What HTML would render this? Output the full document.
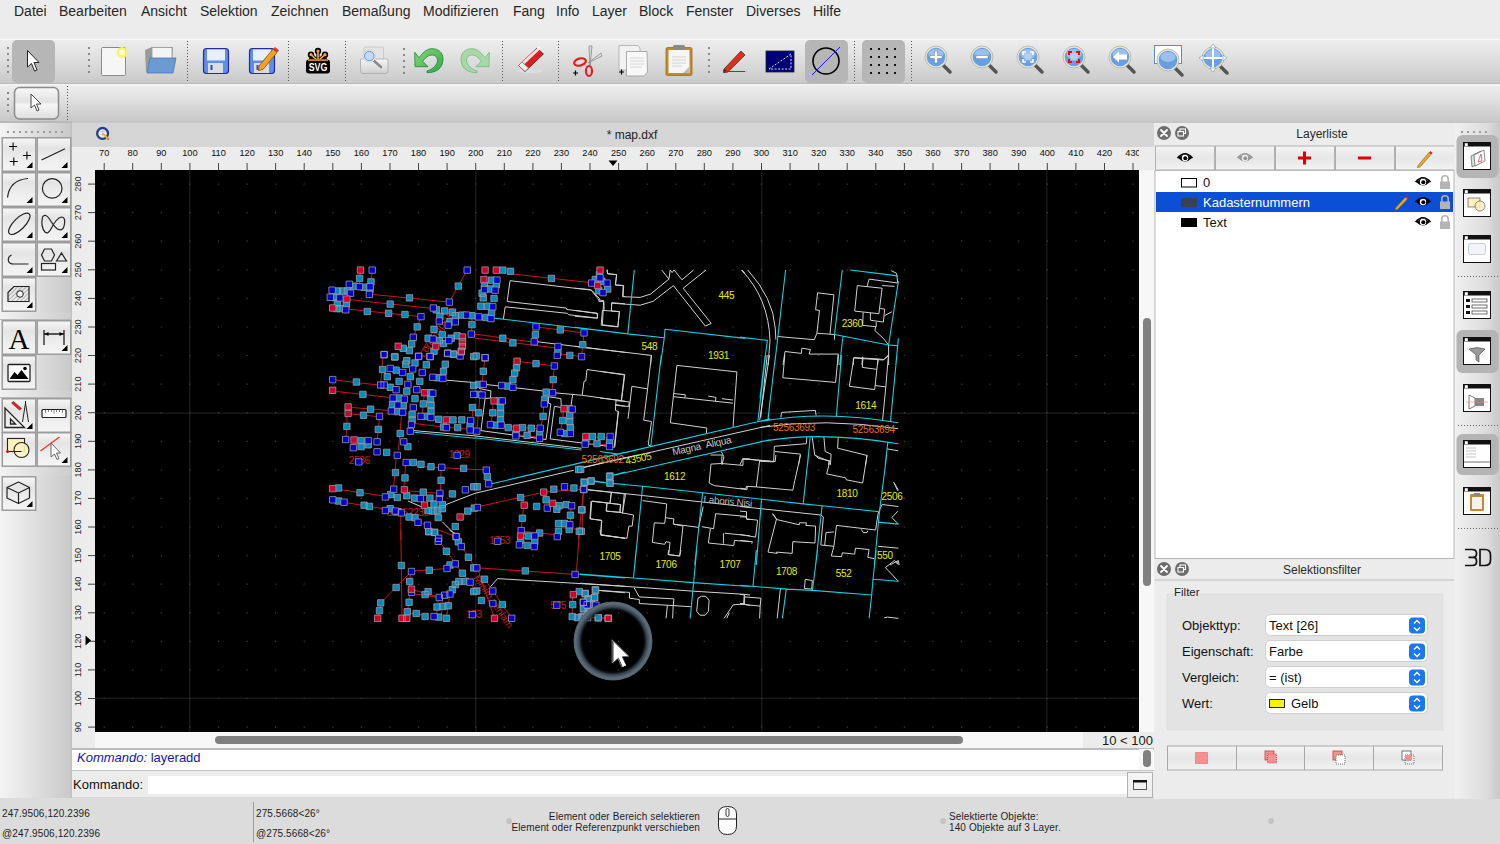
<!DOCTYPE html>
<html><head><meta charset="utf-8">
<style>
*{box-sizing:border-box;margin:0;padding:0}
html,body{width:1500px;height:844px;overflow:hidden;background:#ececec;font-family:"Liberation Sans",sans-serif;color:#1a1a1a;position:relative}
.abs{position:absolute}
#menubar{left:0;top:0;width:1500px;height:38px;background:#ececec}
#menubar span{position:absolute;top:3px;font-size:14px;color:#262626}
#tb1{left:0;top:39px;width:1500px;height:45px;background:linear-gradient(#ededed,#e4e4e4 30%,#cbcbcb 95%);border-top:1px solid #fafafa;border-bottom:1px solid #b8b8b8}
#tb2{left:0;top:84px;width:1500px;height:39px;background:linear-gradient(#eeeeee,#e2e2e2 35%,#cacaca 93%);border-top:1px solid #f6f6f6;border-bottom:2px solid #b8b8b8}
#toolbox{left:0;top:123px;width:71px;height:676px;background:linear-gradient(90deg,#f4f4f4,#c9c9c9)}
.tbtn{position:absolute;width:35px;height:35px;border:1.5px solid #9a9a9a;background:linear-gradient(#f6f6f6,#e6e6e6 40%,#f3f3f3)}
#tabbar{left:72px;top:123px;width:1082px;height:24px;background:#d5d5d5}
#rulerTop{left:72px;top:147px;width:1082px;height:23px;background:#ececec}
#rulerLeft{left:72px;top:170px;width:23px;height:578px;background:#ececec}
#canvas{left:95px;top:170px;width:1044px;height:562px;background:#000;overflow:hidden}
#status{left:0;top:799px;width:1500px;height:45px;background:#dcdcdc}

</style></head>
<body>
<div id="menubar" class="abs">
<span style="left:14px">Datei</span><span style="left:59px">Bearbeiten</span><span style="left:141px">Ansicht</span><span style="left:200px">Selektion</span><span style="left:271px">Zeichnen</span><span style="left:342px">Bemaßung</span><span style="left:423px">Modifizieren</span><span style="left:513px">Fang</span><span style="left:556px">Info</span><span style="left:592px">Layer</span><span style="left:639px">Block</span><span style="left:686px">Fenster</span><span style="left:746px">Diverses</span><span style="left:813px">Hilfe</span>
</div>
<div id="tb1" class="abs"></div>
<div id="tb2" class="abs"></div>
<svg class="abs" style="left:0;top:0" width="1500" height="123"><defs><linearGradient id="prg" x1="0" y1="0" x2="0" y2="1"><stop offset="0" stop-color="#f6f6f6"/><stop offset="1" stop-color="#cfcfcf"/></linearGradient><linearGradient id="ug" x1="0" y1="0" x2="1" y2="1"><stop offset="0" stop-color="#8fd47a"/><stop offset="1" stop-color="#2ea84a"/></linearGradient><linearGradient id="btng" x1="0" y1="0" x2="0" y2="1"><stop offset="0" stop-color="#f8f8f8"/><stop offset="0.45" stop-color="#e2e2e2"/><stop offset="0.55" stop-color="#f6f6f6"/><stop offset="1" stop-color="#dedede"/></linearGradient></defs><rect x="7" y="47" width="2" height="2" fill="#8a8a8a"/><rect x="7" y="53" width="2" height="2" fill="#8a8a8a"/><rect x="7" y="59" width="2" height="2" fill="#8a8a8a"/><rect x="7" y="65" width="2" height="2" fill="#8a8a8a"/><rect x="7" y="71" width="2" height="2" fill="#8a8a8a"/><rect x="12" y="40" width="43" height="43" rx="5" fill="#b6b6b6"/><path d="M27.5 50.5 L27.5 67 L31.5 63.5 L34.5 71 L37 70 L34 62.5 L39 62.5 Z" fill="#fff" stroke="#222" stroke-width="1"/><rect x="88" y="47" width="2" height="2" fill="#8a8a8a"/><rect x="88" y="53" width="2" height="2" fill="#8a8a8a"/><rect x="88" y="59" width="2" height="2" fill="#8a8a8a"/><rect x="88" y="65" width="2" height="2" fill="#8a8a8a"/><rect x="88" y="71" width="2" height="2" fill="#8a8a8a"/><rect x="101.5" y="47.5" width="24" height="28" rx="1" fill="#f6f6f6" stroke="#8a8a8a"/><circle cx="122" cy="52.5" r="5.5" fill="#f4f46a" opacity="0.9"/><circle cx="122" cy="52.5" r="3" fill="#ffffc0"/><path d="M145 50 L152 47 L173 47 L172 62 L146 72 Z" fill="#9a9a9a"/><rect x="152" y="47.5" width="20" height="16" fill="#f4f4f4" stroke="#999" stroke-width="0.8"/><path d="M150 58 L176 58 L173 73 L147 73 Z" fill="#6b9bd2" stroke="#4a7ab8" stroke-width="0.8"/><line x1="187.5" y1="41" x2="187.5" y2="81" stroke="#555" stroke-width="1" stroke-dasharray="1 2"/><rect x="203.5" y="48.5" width="25" height="25" rx="3" fill="#5c8df2" stroke="#2a2a9a" stroke-width="1.2"/><rect x="207" y="49.5" width="18" height="11" fill="#e8eefc"/><rect x="208" y="63" width="15" height="10" fill="#dcdcdc"/><rect x="210.5" y="65" width="2" height="5" fill="#2a4ad0"/><rect x="249.5" y="48.5" width="25" height="25" rx="3" fill="#5c8df2" stroke="#2a2a9a" stroke-width="1.2"/><rect x="253" y="49.5" width="18" height="11" fill="#e8eefc"/><rect x="254" y="63" width="15" height="10" fill="#dcdcdc"/><rect x="256.5" y="65" width="2" height="5" fill="#2a4ad0"/><path d="M259 66 L273 49 L277 52.5 L263 69.5 L258.5 70.5 Z" fill="#f2a21e" stroke="#8a4a10" stroke-width="0.8"/><path d="M273 49 L275 47 L279 50.5 L277 52.5Z" fill="#e03030"/><line x1="288.5" y1="41" x2="288.5" y2="81" stroke="#555" stroke-width="1" stroke-dasharray="1 2"/><g stroke="#000" stroke-width="1.6"><path d="M318 61 L311 54.7 M318 61 L318 51 M318 61 L325 54.7 M318 61 L309 59 M318 61 L327 59" stroke="#000" stroke-width="3.2"/><circle cx="311" cy="54.7" r="2.4" fill="#f6a530"/><circle cx="318" cy="51" r="2.4" fill="#f6a530"/><circle cx="325" cy="54.7" r="2.4" fill="#f6a530"/></g><path d="M318 61 L311 54.7 M318 61 L318 51 M318 61 L325 54.7 M318 61 L309.5 59.5 M318 61 L326.5 59.5" stroke="#f6a530" stroke-width="1.6"/><rect x="306" y="59.5" width="24" height="14" rx="3" fill="#000"/><rect x="308" y="59.5" width="20" height="1.3" fill="#f6a530"/><text x="318" y="71.5" font-family="Liberation Sans" font-weight="bold" font-size="11" fill="#fff" text-anchor="middle" transform="translate(318 0) scale(0.8 1) translate(-318 0)">SVG</text><line x1="345.5" y1="41" x2="345.5" y2="81" stroke="#555" stroke-width="1" stroke-dasharray="1 2"/><rect x="364" y="47" width="19.5" height="13" rx="1" fill="#e4e4e4" stroke="#c4c4c4" stroke-width="0.8"/><path d="M361 59 L387 59 Q388 59 388 61 L388 71 Q388 73.5 385 73.5 L363 73.5 Q360.5 73.5 360.5 71 L360.5 61 Q360.5 59 361 59 Z" fill="url(#prg)" stroke="#a8a8a8" stroke-width="0.8"/><line x1="373" y1="60" x2="381" y2="67" stroke="#8a8a8a" stroke-width="2.6" stroke-linecap="round"/><circle cx="369.3" cy="56" r="6.2" fill="#f2f2f2" stroke="#d8d8d8" stroke-width="1"/><circle cx="369.3" cy="56" r="4.8" fill="#c4daf2" stroke="#5a8ad0" stroke-width="0.9"/><rect x="403" y="48" width="2" height="2" fill="#8a8a8a"/><rect x="403" y="54" width="2" height="2" fill="#8a8a8a"/><rect x="403" y="60" width="2" height="2" fill="#8a8a8a"/><rect x="403" y="66" width="2" height="2" fill="#8a8a8a"/><rect x="403" y="72" width="2" height="2" fill="#8a8a8a"/><path d="M414.7 52.3 L419 57.7 C424 51 428 48.7 432 48.7 C439 48.7 443 53 443 59 C443 67 438 72.7 427 72.7 L427 71 C433 69 437.5 65 437.5 60 C437.5 57 435 55 432 55 C429 55 426 57 422.7 61.3 L428 66.7 L415 66.7 Z" fill="url(#ug)" stroke="#118a30" stroke-width="0.8"/><g transform="translate(904 0) scale(-1 1)"><path d="M414.7 52.3 L419 57.7 C424 51 428 48.7 432 48.7 C439 48.7 443 53 443 59 C443 67 438 72.7 427 72.7 L427 71 C433 69 437.5 65 437.5 60 C437.5 57 435 55 432 55 C429 55 426 57 422.7 61.3 L428 66.7 L415 66.7 Z" fill="#a8d8a8" stroke="#70b880" stroke-width="0.8"/></g><line x1="502.5" y1="41" x2="502.5" y2="81" stroke="#555" stroke-width="1" stroke-dasharray="1 2"/><ellipse cx="530" cy="71" rx="13" ry="2" fill="#ddd"/><path d="M518.5 65.5 L537 48 L543.5 54 L525 71.5 Z" fill="#d42020" stroke="#8a1010" stroke-width="0.8"/><path d="M520.5 63.5 L539 46.5 L541 48.5 L522.5 66 Z" fill="#fff" opacity="0.85"/><path d="M518.5 65.5 L522 62 L528.5 68 L525 71.5 Z" fill="#f2f2f2" stroke="#777" stroke-width="0.8"/><line x1="558.5" y1="41" x2="558.5" y2="81" stroke="#555" stroke-width="1" stroke-dasharray="1 2"/><path d="M589 46 L592 46 L590 67 Z" fill="#ddd" stroke="#888" stroke-width="0.8"/><path d="M601 53 L602 56 L588 63 Z" fill="#ddd" stroke="#888" stroke-width="0.8"/><ellipse cx="580" cy="62" rx="6" ry="3.5" fill="none" stroke="#e02020" stroke-width="2.2" transform="rotate(-15 580 62)"/><ellipse cx="589" cy="71" rx="3" ry="5" fill="none" stroke="#e02020" stroke-width="2.2"/><path d="M573 73 h5 M575.5 70.5 v5" stroke="#000" stroke-width="1.2"/><path d="M619 45.5 L638 45.5 L640 48 L640 70 L619 70 Z" fill="#f2f2f2" stroke="#aaa" stroke-width="0.8"/><path d="M626.5 51.5 L647 51.5 L647.5 72 L644 76 L626.5 76 Z" fill="#f8f8f8" stroke="#999" stroke-width="0.8"/><path d="M630 58 h14 M630 61 h14 M630 64 h14 M630 67 h12" stroke="#ccc" stroke-width="0.8"/><path d="M619 72 h5 M621.5 69.5 v5" stroke="#000" stroke-width="1.2"/><rect x="666" y="47.5" width="26" height="28" rx="1.5" fill="#c08a30" stroke="#a06a18" stroke-width="0.8"/><rect x="668.5" y="50" width="21" height="23" fill="#f6f6f6"/><rect x="673" y="45" width="12" height="5" rx="1.5" fill="#8a8a80"/><path d="M672 57 h14 M672 60 h14 M672 63 h14 M672 66 h10" stroke="#ccc" stroke-width="0.8"/><path d="M689 73 L683 73 L689 67 Z" fill="#bbb"/><rect x="708" y="47" width="2" height="2" fill="#8a8a8a"/><rect x="708" y="53" width="2" height="2" fill="#8a8a8a"/><rect x="708" y="59" width="2" height="2" fill="#8a8a8a"/><rect x="708" y="65" width="2" height="2" fill="#8a8a8a"/><rect x="708" y="71" width="2" height="2" fill="#8a8a8a"/><path d="M724 69 L741 51 L745 55 L728 72 L723.5 72.5 Z" fill="#d83020" stroke="#6a3010" stroke-width="0.8"/><path d="M724 69 L728 72 L723.5 72.5Z" fill="#222"/><line x1="723" y1="71.5" x2="745" y2="71.5" stroke="#f00" stroke-width="1"/><rect x="766" y="51" width="28" height="21" fill="#00007a" stroke="#222" stroke-width="0.8"/><path d="M769 69 L791 54 L791 69 Z" fill="none" stroke="#ddd" stroke-width="1" stroke-dasharray="2 1.5"/><rect x="805" y="40" width="43" height="43" rx="5" fill="#b6b6b6"/><circle cx="826" cy="61" r="13" fill="none" stroke="#000" stroke-width="1.6"/><line x1="812" y1="75" x2="840" y2="47" stroke="#1a1aff" stroke-width="1"/><line x1="854.5" y1="41" x2="854.5" y2="81" stroke="#555" stroke-width="1" stroke-dasharray="1 2"/><rect x="862" y="40" width="43" height="43" rx="5" fill="#b6b6b6"/><rect x="870" y="48" width="2" height="2" fill="#111"/><rect x="870" y="56" width="2" height="2" fill="#111"/><rect x="870" y="64" width="2" height="2" fill="#111"/><rect x="870" y="72" width="2" height="2" fill="#111"/><rect x="878" y="48" width="2" height="2" fill="#111"/><rect x="878" y="56" width="2" height="2" fill="#111"/><rect x="878" y="64" width="2" height="2" fill="#111"/><rect x="878" y="72" width="2" height="2" fill="#111"/><rect x="886" y="48" width="2" height="2" fill="#111"/><rect x="886" y="56" width="2" height="2" fill="#111"/><rect x="886" y="64" width="2" height="2" fill="#111"/><rect x="886" y="72" width="2" height="2" fill="#111"/><rect x="894" y="48" width="2" height="2" fill="#111"/><rect x="894" y="56" width="2" height="2" fill="#111"/><rect x="894" y="64" width="2" height="2" fill="#111"/><rect x="894" y="72" width="2" height="2" fill="#111"/><line x1="911.5" y1="41" x2="911.5" y2="81" stroke="#555" stroke-width="1" stroke-dasharray="1 2"/><line x1="943" y1="65" x2="950" y2="72" stroke="#555" stroke-width="3.5" stroke-linecap="round"/><circle cx="936" cy="57" r="11" fill="#e6e6dc" stroke="#b0b0a0" stroke-width="0.8"/><circle cx="936" cy="57" r="9.3" fill="#6a9ee0"/><ellipse cx="936" cy="54" rx="7.5" ry="5" fill="#a8c8f0" opacity="0.8"/><path d="M934.5 51 h3 v4.5 h4.5 v3 h-4.5 v4.5 h-3 v-4.5 h-4.5 v-3 h4.5 Z" fill="#fff" stroke="#4a7ab8" stroke-width="0.5"/><line x1="989" y1="65" x2="996" y2="72" stroke="#555" stroke-width="3.5" stroke-linecap="round"/><circle cx="982" cy="57" r="11" fill="#e6e6dc" stroke="#b0b0a0" stroke-width="0.8"/><circle cx="982" cy="57" r="9.3" fill="#6a9ee0"/><ellipse cx="982" cy="54" rx="7.5" ry="5" fill="#a8c8f0" opacity="0.8"/><rect x="976" y="55.5" width="12" height="3.2" fill="#fff" stroke="#4a7ab8" stroke-width="0.5"/><line x1="1035" y1="65" x2="1042" y2="72" stroke="#555" stroke-width="3.5" stroke-linecap="round"/><circle cx="1028" cy="57" r="11" fill="#e6e6dc" stroke="#b0b0a0" stroke-width="0.8"/><circle cx="1028" cy="57" r="9.3" fill="#6a9ee0"/><ellipse cx="1028" cy="54" rx="7.5" ry="5" fill="#a8c8f0" opacity="0.8"/><rect x="1024.5" y="53.5" width="7" height="7" fill="#b8d4f4" opacity="0.8"/><path d="M1023 55 v-3 h3 M1030 52 h3 v3 M1033 59 v3 h-3 M1026 62 h-3 v-3" fill="none" stroke="#fff" stroke-width="1.7"/><line x1="1081" y1="65" x2="1088" y2="72" stroke="#555" stroke-width="3.5" stroke-linecap="round"/><circle cx="1074" cy="57" r="11" fill="#e6e6dc" stroke="#b0b0a0" stroke-width="0.8"/><circle cx="1074" cy="57" r="9.3" fill="#6a9ee0"/><ellipse cx="1074" cy="54" rx="7.5" ry="5" fill="#a8c8f0" opacity="0.8"/><rect x="1070.5" y="53.5" width="7" height="7" fill="#b8d4f4" opacity="0.8"/><path d="M1069 55 v-3 h3 M1076 52 h3 v3 M1079 59 v3 h-3 M1072 62 h-3 v-3" fill="none" stroke="#f00" stroke-width="2"/><line x1="1127" y1="65" x2="1134" y2="72" stroke="#555" stroke-width="3.5" stroke-linecap="round"/><circle cx="1120" cy="57" r="11" fill="#e6e6dc" stroke="#b0b0a0" stroke-width="0.8"/><circle cx="1120" cy="57" r="9.3" fill="#6a9ee0"/><ellipse cx="1120" cy="54" rx="7.5" ry="5" fill="#a8c8f0" opacity="0.8"/><path d="M1113 57 L1119 51.5 L1119 54.5 L1127 54.5 L1127 59.5 L1119 59.5 L1119 62.5 Z" fill="#fff"/><rect x="1154.5" y="45.5" width="27" height="18" fill="#fff" stroke="#5a8ad0" stroke-width="1"/><line x1="1175" y1="68" x2="1182" y2="75" stroke="#555" stroke-width="3.5" stroke-linecap="round"/><circle cx="1168" cy="60" r="11" fill="#e6e6dc" stroke="#b0b0a0" stroke-width="0.8"/><circle cx="1168" cy="60" r="9.3" fill="#6a9ee0"/><ellipse cx="1168" cy="57" rx="7.5" ry="5" fill="#a8c8f0" opacity="0.8"/><line x1="1220" y1="66" x2="1227" y2="73" stroke="#555" stroke-width="3.5" stroke-linecap="round"/><circle cx="1213" cy="58" r="11" fill="#e6e6dc" stroke="#b0b0a0" stroke-width="0.8"/><circle cx="1213" cy="58" r="9.3" fill="#6a9ee0"/><ellipse cx="1213" cy="55" rx="7.5" ry="5" fill="#a8c8f0" opacity="0.8"/><path d="M1213 45 v26 M1200 58 h26" stroke="#fff" stroke-width="2"/><path d="M1213 44 l-3 4 h6z M1213 72 l-3 -4 h6z M1199 58 l4 -3 v6z M1227 58 l-4 -3 v6z" fill="#fff" stroke="#4a7ab8" stroke-width="0.5"/><rect x="7" y="92" width="2" height="2" fill="#8a8a8a"/><rect x="7" y="98" width="2" height="2" fill="#8a8a8a"/><rect x="7" y="104" width="2" height="2" fill="#8a8a8a"/><rect x="7" y="110" width="2" height="2" fill="#8a8a8a"/><rect x="14.5" y="87.5" width="44" height="31.5" rx="5" fill="url(#btng)" stroke="#8a8a8a" stroke-width="1.5"/><path d="M31 94 L31 108 L34.5 105 L37 111 L39 110 L36.5 104 L41 104 Z" fill="#fff" stroke="#333" stroke-width="0.9"/><line x1="67.5" y1="86" x2="67.5" y2="120" stroke="#555" stroke-width="1" stroke-dasharray="1 2"/></svg>
<div id="toolbox" class="abs"></div><div class="abs" style="left:70px;top:123px;width:2px;height:676px;background:#c2c2c2"></div><svg class="abs" style="left:0;top:123px" width="72" height="676" viewBox="0 123 72 676"><defs><linearGradient id="tbg" x1="0" y1="0" x2="0" y2="1"><stop offset="0" stop-color="#f7f7f7"/><stop offset="0.3" stop-color="#e4e4e4"/><stop offset="0.7" stop-color="#efefef"/><stop offset="1" stop-color="#f4f4f4"/></linearGradient><linearGradient id="sepg" x1="0" y1="0" x2="1" y2="0"><stop offset="0" stop-color="#f2f2f2"/><stop offset="1" stop-color="#cdcdcd"/></linearGradient></defs><rect x="7" y="131" width="2" height="2" fill="#9a9a9a"/><rect x="13" y="131" width="2" height="2" fill="#9a9a9a"/><rect x="19" y="131" width="2" height="2" fill="#9a9a9a"/><rect x="25" y="131" width="2" height="2" fill="#9a9a9a"/><rect x="31" y="131" width="2" height="2" fill="#9a9a9a"/><rect x="37" y="131" width="2" height="2" fill="#9a9a9a"/><rect x="43" y="131" width="2" height="2" fill="#9a9a9a"/><rect x="49" y="131" width="2" height="2" fill="#9a9a9a"/><rect x="55" y="131" width="2" height="2" fill="#9a9a9a"/><rect x="61" y="131" width="2" height="2" fill="#9a9a9a"/><rect x="2.25" y="137.75" width="33.5" height="33.5" fill="url(#tbg)" stroke="#9c9c9c" stroke-width="1.5"/><g transform="translate(1.5,137)"><path d="M7.6 9.5 h8 M11.6 5.5 v8 M21.4 18.5 h8 M25.4 14.5 v8 M8.3 24.4 h8 M12.3 20.4 v8" stroke="#000" stroke-width="1.05"/></g><path d="M32.5 162 L32.5 168 L26.5 168 Z" fill="#000"/><rect x="37.25" y="137.75" width="33.5" height="33.5" fill="url(#tbg)" stroke="#9c9c9c" stroke-width="1.5"/><g transform="translate(36.5,137)"><path d="M5 23 L28.5 11.8" stroke="#222" fill="none" stroke-width="1.2"/></g><path d="M67.5 162 L67.5 168 L61.5 168 Z" fill="#000"/><rect x="2.25" y="172.75" width="33.5" height="33.5" fill="url(#tbg)" stroke="#9c9c9c" stroke-width="1.5"/><g transform="translate(1.5,172)"><path d="M6 25.5 Q8 8 26.5 6.5" stroke="#222" fill="none" stroke-width="1.2"/></g><path d="M32.5 197 L32.5 203 L26.5 203 Z" fill="#000"/><rect x="37.25" y="172.75" width="33.5" height="33.5" fill="url(#tbg)" stroke="#9c9c9c" stroke-width="1.5"/><g transform="translate(36.5,172)"><circle cx="15.7" cy="16.4" r="9.8" stroke="#222" fill="none" stroke-width="1.2"/></g><path d="M67.5 197 L67.5 203 L61.5 203 Z" fill="#000"/><rect x="2.25" y="207.75" width="33.5" height="33.5" fill="url(#tbg)" stroke="#9c9c9c" stroke-width="1.5"/><g transform="translate(1.5,207)"><ellipse cx="17.8" cy="16.8" rx="14" ry="5.6" transform="rotate(-45 17.8 16.8)" stroke="#222" fill="none" stroke-width="1.2"/></g><path d="M32.5 232 L32.5 238 L26.5 238 Z" fill="#000"/><rect x="37.25" y="207.75" width="33.5" height="33.5" fill="url(#tbg)" stroke="#9c9c9c" stroke-width="1.5"/><g transform="translate(36.5,207)"><path d="M6 10 Q4 20 8.5 25 Q11.5 28 15 21 Q20 11 25 10 Q29 10 28 17 Q27 25 21 22 Q17 19 13 12 Q9 6 6 10Z" stroke="#222" fill="none" stroke-width="1.2"/></g><path d="M67.5 232 L67.5 238 L61.5 238 Z" fill="#000"/><rect x="2.25" y="242.75" width="33.5" height="33.5" fill="url(#tbg)" stroke="#9c9c9c" stroke-width="1.5"/><g transform="translate(1.5,242)"><path d="M10 13 Q6 15 7 19 Q8 22 12 22 L27 22" stroke="#222" fill="none" stroke-width="1.2"/></g><path d="M32.5 267 L32.5 273 L26.5 273 Z" fill="#000"/><rect x="37.25" y="242.75" width="33.5" height="33.5" fill="url(#tbg)" stroke="#9c9c9c" stroke-width="1.5"/><g transform="translate(36.5,242)"><path d="M5 13 L8 7 L15 7 L18 13 L15 19 L8 19 Z" stroke="#222" fill="none" stroke-width="1.2"/><path d="M20 19 L25 11 L30 19 Z" stroke="#222" fill="none" stroke-width="1.2"/><rect x="5" y="21.5" width="14" height="6.5" stroke="#222" fill="none" stroke-width="1.2"/></g><path d="M67.5 267 L67.5 273 L61.5 273 Z" fill="#000"/><rect x="2.25" y="277.75" width="33.5" height="33.5" fill="url(#tbg)" stroke="#9c9c9c" stroke-width="1.5"/><g transform="translate(1.5,277)"><defs><pattern id="hp" width="3" height="3" patternUnits="userSpaceOnUse" patternTransform="rotate(45)"><line x1="0" y1="0" x2="0" y2="3" stroke="#555" stroke-width="0.8"/></pattern></defs><path d="M6.5 15.5 L12.5 9.5 L27.5 9.5 L27.5 24.5 L6.5 24.5 Z" fill="url(#hp)" stroke="#222" stroke-width="1.2"/><circle cx="18.5" cy="17" r="3.3" fill="#f2f2f2" stroke="#222" stroke-width="1"/></g><path d="M32.5 302 L32.5 308 L26.5 308 Z" fill="#000"/><rect x="0" y="312.5" width="71" height="7" fill="url(#sepg)"/><line x1="0" y1="319.5" x2="71" y2="319.5" stroke="#b8b8b8" stroke-width="1"/><rect x="2.25" y="320.75" width="33.5" height="33.5" fill="url(#tbg)" stroke="#9c9c9c" stroke-width="1.5"/><g transform="translate(1.5,320)"><text x="17.5" y="29" font-family="Liberation Serif" font-size="29" text-anchor="middle" fill="#000">A</text></g><rect x="37.25" y="320.75" width="33.5" height="33.5" fill="url(#tbg)" stroke="#9c9c9c" stroke-width="1.5"/><g transform="translate(36.5,320)"><path d="M7.5 10 v15 M27.5 10 v15 M8 14 h19" stroke="#222" stroke-width="1.3" fill="none"/><path d="M8 14 l4 -2 v4z M27 14 l-4 -2 v4z" fill="#000"/></g><path d="M67.5 345 L67.5 351 L61.5 351 Z" fill="#000"/><rect x="2.25" y="355.75" width="33.5" height="33.5" fill="url(#tbg)" stroke="#9c9c9c" stroke-width="1.5"/><g transform="translate(1.5,355)"><rect x="6.5" y="9.5" width="22" height="17" rx="1" fill="#fff" stroke="#222" stroke-width="1.3"/><path d="M8 24 L13 17 L16 20 L20 15 L27 24 Z" fill="#000"/><circle cx="23.5" cy="13.5" r="1.8" fill="#000"/></g><rect x="0" y="390" width="71" height="8" fill="url(#sepg)"/><line x1="0" y1="397.5" x2="71" y2="397.5" stroke="#b8b8b8" stroke-width="1"/><rect x="2.25" y="398.75" width="33.5" height="33.5" fill="url(#tbg)" stroke="#9c9c9c" stroke-width="1.5"/><g transform="translate(1.5,398)"><path d="M3.5 10 L3.5 29.5 L23 29.5 Z M9 21 L9 26 L14 26Z" fill="none" stroke="#222" stroke-width="1.3"/><path d="M10 5 L18 12 L20 10.5 L12 3.5Z" fill="#e02020" stroke="#802010" stroke-width="0.6"/><path d="M24 5 L21 24 M24 5 L27 24 M24 3 v3" stroke="#222" stroke-width="1" fill="none"/></g><path d="M32.5 423 L32.5 429 L26.5 429 Z" fill="#000"/><rect x="37.25" y="398.75" width="33.5" height="33.5" fill="url(#tbg)" stroke="#9c9c9c" stroke-width="1.5"/><g transform="translate(36.5,398)"><rect x="5.5" y="11.5" width="24" height="8" rx="1" fill="#fff" stroke="#222" stroke-width="1.2"/><path d="M9 12 v3 M12 12 v2 M15 12 v2 M17.5 12 v3.5 M20 12 v2 M23 12 v2 M26 12 v3" stroke="#555" stroke-width="0.7"/></g><rect x="2.25" y="432.75" width="33.5" height="33.5" fill="url(#tbg)" stroke="#9c9c9c" stroke-width="1.5"/><g transform="translate(1.5,432)"><rect x="6" y="6.5" width="17" height="13" fill="#fdf3c0" stroke="#222" stroke-width="1.1"/><circle cx="20" cy="18" r="7.5" fill="#fdf3c0" fill-opacity="0.9" stroke="#222" stroke-width="1.1"/><path d="M6 19.5 h14" stroke="#222" stroke-width="1"/><circle cx="6" cy="19.5" r="1.5" fill="#f00"/></g><rect x="37.25" y="432.75" width="33.5" height="33.5" fill="url(#tbg)" stroke="#9c9c9c" stroke-width="1.5"/><g transform="translate(36.5,432)"><path d="M4 19 L23 5" stroke="#f03030" stroke-width="1.3"/><path d="M14.5 11 L14.5 25 L18 22 L20.5 27.5 L22.5 26.5 L20 21 L24 21 Z" fill="#fff" stroke="#555" stroke-width="0.9"/></g><path d="M67.5 457 L67.5 463 L61.5 463 Z" fill="#000"/><rect x="0" y="467.5" width="71" height="8" fill="url(#sepg)"/><rect x="2.25" y="476.75" width="33.5" height="33.5" fill="url(#tbg)" stroke="#9c9c9c" stroke-width="1.5"/><g transform="translate(1.5,476)"><path d="M5.5 11.5 L17 6 L28 11.5 L28 22 L17 27.5 L5.5 22 Z M5.5 11.5 L17 17 L28 11.5 M17 17 V27.5" fill="none" stroke="#222" stroke-width="1.2" stroke-linejoin="round"/></g><path d="M32.5 501 L32.5 507 L26.5 507 Z" fill="#000"/></svg>
<div class="abs" style="left:72px;top:121px;width:1082px;height:2px;background:#c6c6c6"></div>
<div class="abs" style="left:72px;top:123px;width:1082px;height:24px;background:#d5d5d5"></div>
<div class="abs" style="left:72px;top:147px;width:1082px;height:23px;background:#ececec"></div>
<div class="abs" style="left:72px;top:170px;width:23px;height:578px;background:#ececec"></div>
<svg class="abs" style="left:94px;top:125px" width="18" height="18"><circle cx="8.6" cy="8.4" r="5.4" fill="#eef0f6" stroke="#2a3a8c" stroke-width="2.3"/><path d="M5.5 6.5 h6 M5.5 9.5 h6 M8.5 4.5 v8" stroke="#b8bcd0" stroke-width="0.6"/><path d="M8.6 8.2 L13.6 13.4" stroke="#f2b222" stroke-width="2"/><circle cx="14.2" cy="14" r="1.2" fill="#e07070"/></svg>
<div class="abs" style="left:532px;top:128px;width:200px;text-align:center;font-size:12px;color:#222">* map.dxf</div>
<svg class="abs" style="left:95px;top:147px" width="1044" height="23" viewBox="95 147 1044 23" font-family="Liberation Sans"><text x="104.2" y="156.2" font-size="9.2" text-anchor="middle" fill="#0e0e0e">70</text><line x1="104.2" y1="163" x2="104.2" y2="170" stroke="#444" stroke-width="1"/><text x="132.7" y="156.2" font-size="9.2" text-anchor="middle" fill="#0e0e0e">80</text><line x1="132.7" y1="163" x2="132.7" y2="170" stroke="#444" stroke-width="1"/><text x="161.3" y="156.2" font-size="9.2" text-anchor="middle" fill="#0e0e0e">90</text><line x1="161.3" y1="163" x2="161.3" y2="170" stroke="#444" stroke-width="1"/><text x="189.9" y="156.2" font-size="9.2" text-anchor="middle" fill="#0e0e0e">100</text><line x1="189.9" y1="163" x2="189.9" y2="170" stroke="#444" stroke-width="1"/><text x="218.5" y="156.2" font-size="9.2" text-anchor="middle" fill="#0e0e0e">110</text><line x1="218.5" y1="163" x2="218.5" y2="170" stroke="#444" stroke-width="1"/><text x="247.1" y="156.2" font-size="9.2" text-anchor="middle" fill="#0e0e0e">120</text><line x1="247.1" y1="163" x2="247.1" y2="170" stroke="#444" stroke-width="1"/><text x="275.6" y="156.2" font-size="9.2" text-anchor="middle" fill="#0e0e0e">130</text><line x1="275.6" y1="163" x2="275.6" y2="170" stroke="#444" stroke-width="1"/><text x="304.2" y="156.2" font-size="9.2" text-anchor="middle" fill="#0e0e0e">140</text><line x1="304.2" y1="163" x2="304.2" y2="170" stroke="#444" stroke-width="1"/><text x="332.8" y="156.2" font-size="9.2" text-anchor="middle" fill="#0e0e0e">150</text><line x1="332.8" y1="163" x2="332.8" y2="170" stroke="#444" stroke-width="1"/><text x="361.4" y="156.2" font-size="9.2" text-anchor="middle" fill="#0e0e0e">160</text><line x1="361.4" y1="163" x2="361.4" y2="170" stroke="#444" stroke-width="1"/><text x="390.0" y="156.2" font-size="9.2" text-anchor="middle" fill="#0e0e0e">170</text><line x1="390.0" y1="163" x2="390.0" y2="170" stroke="#444" stroke-width="1"/><text x="418.5" y="156.2" font-size="9.2" text-anchor="middle" fill="#0e0e0e">180</text><line x1="418.5" y1="163" x2="418.5" y2="170" stroke="#444" stroke-width="1"/><text x="447.1" y="156.2" font-size="9.2" text-anchor="middle" fill="#0e0e0e">190</text><line x1="447.1" y1="163" x2="447.1" y2="170" stroke="#444" stroke-width="1"/><text x="475.7" y="156.2" font-size="9.2" text-anchor="middle" fill="#0e0e0e">200</text><line x1="475.7" y1="163" x2="475.7" y2="170" stroke="#444" stroke-width="1"/><text x="504.3" y="156.2" font-size="9.2" text-anchor="middle" fill="#0e0e0e">210</text><line x1="504.3" y1="163" x2="504.3" y2="170" stroke="#444" stroke-width="1"/><text x="532.9" y="156.2" font-size="9.2" text-anchor="middle" fill="#0e0e0e">220</text><line x1="532.9" y1="163" x2="532.9" y2="170" stroke="#444" stroke-width="1"/><text x="561.4" y="156.2" font-size="9.2" text-anchor="middle" fill="#0e0e0e">230</text><line x1="561.4" y1="163" x2="561.4" y2="170" stroke="#444" stroke-width="1"/><text x="590.0" y="156.2" font-size="9.2" text-anchor="middle" fill="#0e0e0e">240</text><line x1="590.0" y1="163" x2="590.0" y2="170" stroke="#444" stroke-width="1"/><text x="618.6" y="156.2" font-size="9.2" text-anchor="middle" fill="#0e0e0e">250</text><line x1="618.6" y1="163" x2="618.6" y2="170" stroke="#444" stroke-width="1"/><text x="647.2" y="156.2" font-size="9.2" text-anchor="middle" fill="#0e0e0e">260</text><line x1="647.2" y1="163" x2="647.2" y2="170" stroke="#444" stroke-width="1"/><text x="675.8" y="156.2" font-size="9.2" text-anchor="middle" fill="#0e0e0e">270</text><line x1="675.8" y1="163" x2="675.8" y2="170" stroke="#444" stroke-width="1"/><text x="704.3" y="156.2" font-size="9.2" text-anchor="middle" fill="#0e0e0e">280</text><line x1="704.3" y1="163" x2="704.3" y2="170" stroke="#444" stroke-width="1"/><text x="732.9" y="156.2" font-size="9.2" text-anchor="middle" fill="#0e0e0e">290</text><line x1="732.9" y1="163" x2="732.9" y2="170" stroke="#444" stroke-width="1"/><text x="761.5" y="156.2" font-size="9.2" text-anchor="middle" fill="#0e0e0e">300</text><line x1="761.5" y1="163" x2="761.5" y2="170" stroke="#444" stroke-width="1"/><text x="790.1" y="156.2" font-size="9.2" text-anchor="middle" fill="#0e0e0e">310</text><line x1="790.1" y1="163" x2="790.1" y2="170" stroke="#444" stroke-width="1"/><text x="818.7" y="156.2" font-size="9.2" text-anchor="middle" fill="#0e0e0e">320</text><line x1="818.7" y1="163" x2="818.7" y2="170" stroke="#444" stroke-width="1"/><text x="847.2" y="156.2" font-size="9.2" text-anchor="middle" fill="#0e0e0e">330</text><line x1="847.2" y1="163" x2="847.2" y2="170" stroke="#444" stroke-width="1"/><text x="875.8" y="156.2" font-size="9.2" text-anchor="middle" fill="#0e0e0e">340</text><line x1="875.8" y1="163" x2="875.8" y2="170" stroke="#444" stroke-width="1"/><text x="904.4" y="156.2" font-size="9.2" text-anchor="middle" fill="#0e0e0e">350</text><line x1="904.4" y1="163" x2="904.4" y2="170" stroke="#444" stroke-width="1"/><text x="933.0" y="156.2" font-size="9.2" text-anchor="middle" fill="#0e0e0e">360</text><line x1="933.0" y1="163" x2="933.0" y2="170" stroke="#444" stroke-width="1"/><text x="961.6" y="156.2" font-size="9.2" text-anchor="middle" fill="#0e0e0e">370</text><line x1="961.6" y1="163" x2="961.6" y2="170" stroke="#444" stroke-width="1"/><text x="990.1" y="156.2" font-size="9.2" text-anchor="middle" fill="#0e0e0e">380</text><line x1="990.1" y1="163" x2="990.1" y2="170" stroke="#444" stroke-width="1"/><text x="1018.7" y="156.2" font-size="9.2" text-anchor="middle" fill="#0e0e0e">390</text><line x1="1018.7" y1="163" x2="1018.7" y2="170" stroke="#444" stroke-width="1"/><text x="1047.3" y="156.2" font-size="9.2" text-anchor="middle" fill="#0e0e0e">400</text><line x1="1047.3" y1="163" x2="1047.3" y2="170" stroke="#444" stroke-width="1"/><text x="1075.9" y="156.2" font-size="9.2" text-anchor="middle" fill="#0e0e0e">410</text><line x1="1075.9" y1="163" x2="1075.9" y2="170" stroke="#444" stroke-width="1"/><text x="1104.5" y="156.2" font-size="9.2" text-anchor="middle" fill="#0e0e0e">420</text><line x1="1104.5" y1="163" x2="1104.5" y2="170" stroke="#444" stroke-width="1"/><text x="1133.0" y="156.2" font-size="9.2" text-anchor="middle" fill="#0e0e0e">430</text><line x1="1133.0" y1="163" x2="1133.0" y2="170" stroke="#444" stroke-width="1"/><path d="M608.5 160.5 L617.5 160.5 L613 166 Z" fill="#000"/></svg>
<svg class="abs" style="left:72px;top:170px" width="23" height="562" viewBox="72 170 23 562" font-family="Liberation Sans"><text x="0" y="0" font-size="9.2" text-anchor="middle" fill="#1e1e1e" transform="translate(81.3 727.1) rotate(-90)">90</text><line x1="88" y1="727.1" x2="95" y2="727.1" stroke="#444" stroke-width="1"/><text x="0" y="0" font-size="9.2" text-anchor="middle" fill="#1e1e1e" transform="translate(81.3 698.5) rotate(-90)">100</text><line x1="88" y1="698.5" x2="95" y2="698.5" stroke="#444" stroke-width="1"/><text x="0" y="0" font-size="9.2" text-anchor="middle" fill="#1e1e1e" transform="translate(81.3 669.9) rotate(-90)">110</text><line x1="88" y1="669.9" x2="95" y2="669.9" stroke="#444" stroke-width="1"/><text x="0" y="0" font-size="9.2" text-anchor="middle" fill="#1e1e1e" transform="translate(81.3 641.3) rotate(-90)">120</text><line x1="88" y1="641.3" x2="95" y2="641.3" stroke="#444" stroke-width="1"/><text x="0" y="0" font-size="9.2" text-anchor="middle" fill="#1e1e1e" transform="translate(81.3 612.8) rotate(-90)">130</text><line x1="88" y1="612.8" x2="95" y2="612.8" stroke="#444" stroke-width="1"/><text x="0" y="0" font-size="9.2" text-anchor="middle" fill="#1e1e1e" transform="translate(81.3 584.2) rotate(-90)">140</text><line x1="88" y1="584.2" x2="95" y2="584.2" stroke="#444" stroke-width="1"/><text x="0" y="0" font-size="9.2" text-anchor="middle" fill="#1e1e1e" transform="translate(81.3 555.6) rotate(-90)">150</text><line x1="88" y1="555.6" x2="95" y2="555.6" stroke="#444" stroke-width="1"/><text x="0" y="0" font-size="9.2" text-anchor="middle" fill="#1e1e1e" transform="translate(81.3 527.0) rotate(-90)">160</text><line x1="88" y1="527.0" x2="95" y2="527.0" stroke="#444" stroke-width="1"/><text x="0" y="0" font-size="9.2" text-anchor="middle" fill="#1e1e1e" transform="translate(81.3 498.4) rotate(-90)">170</text><line x1="88" y1="498.4" x2="95" y2="498.4" stroke="#444" stroke-width="1"/><text x="0" y="0" font-size="9.2" text-anchor="middle" fill="#1e1e1e" transform="translate(81.3 469.9) rotate(-90)">180</text><line x1="88" y1="469.9" x2="95" y2="469.9" stroke="#444" stroke-width="1"/><text x="0" y="0" font-size="9.2" text-anchor="middle" fill="#1e1e1e" transform="translate(81.3 441.3) rotate(-90)">190</text><line x1="88" y1="441.3" x2="95" y2="441.3" stroke="#444" stroke-width="1"/><text x="0" y="0" font-size="9.2" text-anchor="middle" fill="#1e1e1e" transform="translate(81.3 412.7) rotate(-90)">200</text><line x1="88" y1="412.7" x2="95" y2="412.7" stroke="#444" stroke-width="1"/><text x="0" y="0" font-size="9.2" text-anchor="middle" fill="#1e1e1e" transform="translate(81.3 384.1) rotate(-90)">210</text><line x1="88" y1="384.1" x2="95" y2="384.1" stroke="#444" stroke-width="1"/><text x="0" y="0" font-size="9.2" text-anchor="middle" fill="#1e1e1e" transform="translate(81.3 355.5) rotate(-90)">220</text><line x1="88" y1="355.5" x2="95" y2="355.5" stroke="#444" stroke-width="1"/><text x="0" y="0" font-size="9.2" text-anchor="middle" fill="#1e1e1e" transform="translate(81.3 327.0) rotate(-90)">230</text><line x1="88" y1="327.0" x2="95" y2="327.0" stroke="#444" stroke-width="1"/><text x="0" y="0" font-size="9.2" text-anchor="middle" fill="#1e1e1e" transform="translate(81.3 298.4) rotate(-90)">240</text><line x1="88" y1="298.4" x2="95" y2="298.4" stroke="#444" stroke-width="1"/><text x="0" y="0" font-size="9.2" text-anchor="middle" fill="#1e1e1e" transform="translate(81.3 269.8) rotate(-90)">250</text><line x1="88" y1="269.8" x2="95" y2="269.8" stroke="#444" stroke-width="1"/><text x="0" y="0" font-size="9.2" text-anchor="middle" fill="#1e1e1e" transform="translate(81.3 241.2) rotate(-90)">260</text><line x1="88" y1="241.2" x2="95" y2="241.2" stroke="#444" stroke-width="1"/><text x="0" y="0" font-size="9.2" text-anchor="middle" fill="#1e1e1e" transform="translate(81.3 212.6) rotate(-90)">270</text><line x1="88" y1="212.6" x2="95" y2="212.6" stroke="#444" stroke-width="1"/><text x="0" y="0" font-size="9.2" text-anchor="middle" fill="#1e1e1e" transform="translate(81.3 184.1) rotate(-90)">280</text><line x1="88" y1="184.1" x2="95" y2="184.1" stroke="#444" stroke-width="1"/><path d="M85.5 635.5 L85.5 645.5 L91 640.5 Z" fill="#000"/></svg>
<svg class="abs" style="left:95px;top:170px" width="1044" height="562" viewBox="95 170 1044 562" font-family="Liberation Sans"><rect x="95" y="170" width="1044" height="562" fill="#000"/><rect x="189" y="170" width="1.5" height="562" fill="#181818"/><rect x="475" y="170" width="1.5" height="562" fill="#181818"/><rect x="761" y="170" width="1.5" height="562" fill="#181818"/><rect x="1046" y="170" width="1.5" height="562" fill="#181818"/><rect x="95" y="697.5" width="1044" height="1.5" fill="#181818"/><rect x="95" y="412.5" width="1044" height="1.5" fill="#181818"/><path d="M103.6 726.5h1.2v1.2h-1.2zM103.6 697.9h1.2v1.2h-1.2zM103.6 669.3h1.2v1.2h-1.2zM103.6 640.7h1.2v1.2h-1.2zM103.6 612.2h1.2v1.2h-1.2zM103.6 583.6h1.2v1.2h-1.2zM103.6 555.0h1.2v1.2h-1.2zM103.6 526.4h1.2v1.2h-1.2zM103.6 497.8h1.2v1.2h-1.2zM103.6 469.3h1.2v1.2h-1.2zM103.6 440.7h1.2v1.2h-1.2zM103.6 412.1h1.2v1.2h-1.2zM103.6 383.5h1.2v1.2h-1.2zM103.6 354.9h1.2v1.2h-1.2zM103.6 326.4h1.2v1.2h-1.2zM103.6 297.8h1.2v1.2h-1.2zM103.6 269.2h1.2v1.2h-1.2zM103.6 240.6h1.2v1.2h-1.2zM103.6 212.0h1.2v1.2h-1.2zM103.6 183.5h1.2v1.2h-1.2zM132.1 726.5h1.2v1.2h-1.2zM132.1 697.9h1.2v1.2h-1.2zM132.1 669.3h1.2v1.2h-1.2zM132.1 640.7h1.2v1.2h-1.2zM132.1 612.2h1.2v1.2h-1.2zM132.1 583.6h1.2v1.2h-1.2zM132.1 555.0h1.2v1.2h-1.2zM132.1 526.4h1.2v1.2h-1.2zM132.1 497.8h1.2v1.2h-1.2zM132.1 469.3h1.2v1.2h-1.2zM132.1 440.7h1.2v1.2h-1.2zM132.1 412.1h1.2v1.2h-1.2zM132.1 383.5h1.2v1.2h-1.2zM132.1 354.9h1.2v1.2h-1.2zM132.1 326.4h1.2v1.2h-1.2zM132.1 297.8h1.2v1.2h-1.2zM132.1 269.2h1.2v1.2h-1.2zM132.1 240.6h1.2v1.2h-1.2zM132.1 212.0h1.2v1.2h-1.2zM132.1 183.5h1.2v1.2h-1.2zM160.7 726.5h1.2v1.2h-1.2zM160.7 697.9h1.2v1.2h-1.2zM160.7 669.3h1.2v1.2h-1.2zM160.7 640.7h1.2v1.2h-1.2zM160.7 612.2h1.2v1.2h-1.2zM160.7 583.6h1.2v1.2h-1.2zM160.7 555.0h1.2v1.2h-1.2zM160.7 526.4h1.2v1.2h-1.2zM160.7 497.8h1.2v1.2h-1.2zM160.7 469.3h1.2v1.2h-1.2zM160.7 440.7h1.2v1.2h-1.2zM160.7 412.1h1.2v1.2h-1.2zM160.7 383.5h1.2v1.2h-1.2zM160.7 354.9h1.2v1.2h-1.2zM160.7 326.4h1.2v1.2h-1.2zM160.7 297.8h1.2v1.2h-1.2zM160.7 269.2h1.2v1.2h-1.2zM160.7 240.6h1.2v1.2h-1.2zM160.7 212.0h1.2v1.2h-1.2zM160.7 183.5h1.2v1.2h-1.2zM189.3 726.5h1.2v1.2h-1.2zM189.3 697.9h1.2v1.2h-1.2zM189.3 669.3h1.2v1.2h-1.2zM189.3 640.7h1.2v1.2h-1.2zM189.3 612.2h1.2v1.2h-1.2zM189.3 583.6h1.2v1.2h-1.2zM189.3 555.0h1.2v1.2h-1.2zM189.3 526.4h1.2v1.2h-1.2zM189.3 497.8h1.2v1.2h-1.2zM189.3 469.3h1.2v1.2h-1.2zM189.3 440.7h1.2v1.2h-1.2zM189.3 412.1h1.2v1.2h-1.2zM189.3 383.5h1.2v1.2h-1.2zM189.3 354.9h1.2v1.2h-1.2zM189.3 326.4h1.2v1.2h-1.2zM189.3 297.8h1.2v1.2h-1.2zM189.3 269.2h1.2v1.2h-1.2zM189.3 240.6h1.2v1.2h-1.2zM189.3 212.0h1.2v1.2h-1.2zM189.3 183.5h1.2v1.2h-1.2zM217.9 726.5h1.2v1.2h-1.2zM217.9 697.9h1.2v1.2h-1.2zM217.9 669.3h1.2v1.2h-1.2zM217.9 640.7h1.2v1.2h-1.2zM217.9 612.2h1.2v1.2h-1.2zM217.9 583.6h1.2v1.2h-1.2zM217.9 555.0h1.2v1.2h-1.2zM217.9 526.4h1.2v1.2h-1.2zM217.9 497.8h1.2v1.2h-1.2zM217.9 469.3h1.2v1.2h-1.2zM217.9 440.7h1.2v1.2h-1.2zM217.9 412.1h1.2v1.2h-1.2zM217.9 383.5h1.2v1.2h-1.2zM217.9 354.9h1.2v1.2h-1.2zM217.9 326.4h1.2v1.2h-1.2zM217.9 297.8h1.2v1.2h-1.2zM217.9 269.2h1.2v1.2h-1.2zM217.9 240.6h1.2v1.2h-1.2zM217.9 212.0h1.2v1.2h-1.2zM217.9 183.5h1.2v1.2h-1.2zM246.5 726.5h1.2v1.2h-1.2zM246.5 697.9h1.2v1.2h-1.2zM246.5 669.3h1.2v1.2h-1.2zM246.5 640.7h1.2v1.2h-1.2zM246.5 612.2h1.2v1.2h-1.2zM246.5 583.6h1.2v1.2h-1.2zM246.5 555.0h1.2v1.2h-1.2zM246.5 526.4h1.2v1.2h-1.2zM246.5 497.8h1.2v1.2h-1.2zM246.5 469.3h1.2v1.2h-1.2zM246.5 440.7h1.2v1.2h-1.2zM246.5 412.1h1.2v1.2h-1.2zM246.5 383.5h1.2v1.2h-1.2zM246.5 354.9h1.2v1.2h-1.2zM246.5 326.4h1.2v1.2h-1.2zM246.5 297.8h1.2v1.2h-1.2zM246.5 269.2h1.2v1.2h-1.2zM246.5 240.6h1.2v1.2h-1.2zM246.5 212.0h1.2v1.2h-1.2zM246.5 183.5h1.2v1.2h-1.2zM275.0 726.5h1.2v1.2h-1.2zM275.0 697.9h1.2v1.2h-1.2zM275.0 669.3h1.2v1.2h-1.2zM275.0 640.7h1.2v1.2h-1.2zM275.0 612.2h1.2v1.2h-1.2zM275.0 583.6h1.2v1.2h-1.2zM275.0 555.0h1.2v1.2h-1.2zM275.0 526.4h1.2v1.2h-1.2zM275.0 497.8h1.2v1.2h-1.2zM275.0 469.3h1.2v1.2h-1.2zM275.0 440.7h1.2v1.2h-1.2zM275.0 412.1h1.2v1.2h-1.2zM275.0 383.5h1.2v1.2h-1.2zM275.0 354.9h1.2v1.2h-1.2zM275.0 326.4h1.2v1.2h-1.2zM275.0 297.8h1.2v1.2h-1.2zM275.0 269.2h1.2v1.2h-1.2zM275.0 240.6h1.2v1.2h-1.2zM275.0 212.0h1.2v1.2h-1.2zM275.0 183.5h1.2v1.2h-1.2zM303.6 726.5h1.2v1.2h-1.2zM303.6 697.9h1.2v1.2h-1.2zM303.6 669.3h1.2v1.2h-1.2zM303.6 640.7h1.2v1.2h-1.2zM303.6 612.2h1.2v1.2h-1.2zM303.6 583.6h1.2v1.2h-1.2zM303.6 555.0h1.2v1.2h-1.2zM303.6 526.4h1.2v1.2h-1.2zM303.6 497.8h1.2v1.2h-1.2zM303.6 469.3h1.2v1.2h-1.2zM303.6 440.7h1.2v1.2h-1.2zM303.6 412.1h1.2v1.2h-1.2zM303.6 383.5h1.2v1.2h-1.2zM303.6 354.9h1.2v1.2h-1.2zM303.6 326.4h1.2v1.2h-1.2zM303.6 297.8h1.2v1.2h-1.2zM303.6 269.2h1.2v1.2h-1.2zM303.6 240.6h1.2v1.2h-1.2zM303.6 212.0h1.2v1.2h-1.2zM303.6 183.5h1.2v1.2h-1.2zM332.2 726.5h1.2v1.2h-1.2zM332.2 697.9h1.2v1.2h-1.2zM332.2 669.3h1.2v1.2h-1.2zM332.2 640.7h1.2v1.2h-1.2zM332.2 612.2h1.2v1.2h-1.2zM332.2 583.6h1.2v1.2h-1.2zM332.2 555.0h1.2v1.2h-1.2zM332.2 526.4h1.2v1.2h-1.2zM332.2 497.8h1.2v1.2h-1.2zM332.2 469.3h1.2v1.2h-1.2zM332.2 440.7h1.2v1.2h-1.2zM332.2 412.1h1.2v1.2h-1.2zM332.2 383.5h1.2v1.2h-1.2zM332.2 354.9h1.2v1.2h-1.2zM332.2 326.4h1.2v1.2h-1.2zM332.2 297.8h1.2v1.2h-1.2zM332.2 269.2h1.2v1.2h-1.2zM332.2 240.6h1.2v1.2h-1.2zM332.2 212.0h1.2v1.2h-1.2zM332.2 183.5h1.2v1.2h-1.2zM360.8 726.5h1.2v1.2h-1.2zM360.8 697.9h1.2v1.2h-1.2zM360.8 669.3h1.2v1.2h-1.2zM360.8 640.7h1.2v1.2h-1.2zM360.8 612.2h1.2v1.2h-1.2zM360.8 583.6h1.2v1.2h-1.2zM360.8 555.0h1.2v1.2h-1.2zM360.8 526.4h1.2v1.2h-1.2zM360.8 497.8h1.2v1.2h-1.2zM360.8 469.3h1.2v1.2h-1.2zM360.8 440.7h1.2v1.2h-1.2zM360.8 412.1h1.2v1.2h-1.2zM360.8 383.5h1.2v1.2h-1.2zM360.8 354.9h1.2v1.2h-1.2zM360.8 326.4h1.2v1.2h-1.2zM360.8 297.8h1.2v1.2h-1.2zM360.8 269.2h1.2v1.2h-1.2zM360.8 240.6h1.2v1.2h-1.2zM360.8 212.0h1.2v1.2h-1.2zM360.8 183.5h1.2v1.2h-1.2zM389.4 726.5h1.2v1.2h-1.2zM389.4 697.9h1.2v1.2h-1.2zM389.4 669.3h1.2v1.2h-1.2zM389.4 640.7h1.2v1.2h-1.2zM389.4 612.2h1.2v1.2h-1.2zM389.4 583.6h1.2v1.2h-1.2zM389.4 555.0h1.2v1.2h-1.2zM389.4 526.4h1.2v1.2h-1.2zM389.4 497.8h1.2v1.2h-1.2zM389.4 469.3h1.2v1.2h-1.2zM389.4 440.7h1.2v1.2h-1.2zM389.4 412.1h1.2v1.2h-1.2zM389.4 383.5h1.2v1.2h-1.2zM389.4 354.9h1.2v1.2h-1.2zM389.4 326.4h1.2v1.2h-1.2zM389.4 297.8h1.2v1.2h-1.2zM389.4 269.2h1.2v1.2h-1.2zM389.4 240.6h1.2v1.2h-1.2zM389.4 212.0h1.2v1.2h-1.2zM389.4 183.5h1.2v1.2h-1.2zM417.9 726.5h1.2v1.2h-1.2zM417.9 697.9h1.2v1.2h-1.2zM417.9 669.3h1.2v1.2h-1.2zM417.9 640.7h1.2v1.2h-1.2zM417.9 612.2h1.2v1.2h-1.2zM417.9 583.6h1.2v1.2h-1.2zM417.9 555.0h1.2v1.2h-1.2zM417.9 526.4h1.2v1.2h-1.2zM417.9 497.8h1.2v1.2h-1.2zM417.9 469.3h1.2v1.2h-1.2zM417.9 440.7h1.2v1.2h-1.2zM417.9 412.1h1.2v1.2h-1.2zM417.9 383.5h1.2v1.2h-1.2zM417.9 354.9h1.2v1.2h-1.2zM417.9 326.4h1.2v1.2h-1.2zM417.9 297.8h1.2v1.2h-1.2zM417.9 269.2h1.2v1.2h-1.2zM417.9 240.6h1.2v1.2h-1.2zM417.9 212.0h1.2v1.2h-1.2zM417.9 183.5h1.2v1.2h-1.2zM446.5 726.5h1.2v1.2h-1.2zM446.5 697.9h1.2v1.2h-1.2zM446.5 669.3h1.2v1.2h-1.2zM446.5 640.7h1.2v1.2h-1.2zM446.5 612.2h1.2v1.2h-1.2zM446.5 583.6h1.2v1.2h-1.2zM446.5 555.0h1.2v1.2h-1.2zM446.5 526.4h1.2v1.2h-1.2zM446.5 497.8h1.2v1.2h-1.2zM446.5 469.3h1.2v1.2h-1.2zM446.5 440.7h1.2v1.2h-1.2zM446.5 412.1h1.2v1.2h-1.2zM446.5 383.5h1.2v1.2h-1.2zM446.5 354.9h1.2v1.2h-1.2zM446.5 326.4h1.2v1.2h-1.2zM446.5 297.8h1.2v1.2h-1.2zM446.5 269.2h1.2v1.2h-1.2zM446.5 240.6h1.2v1.2h-1.2zM446.5 212.0h1.2v1.2h-1.2zM446.5 183.5h1.2v1.2h-1.2zM475.1 726.5h1.2v1.2h-1.2zM475.1 697.9h1.2v1.2h-1.2zM475.1 669.3h1.2v1.2h-1.2zM475.1 640.7h1.2v1.2h-1.2zM475.1 612.2h1.2v1.2h-1.2zM475.1 583.6h1.2v1.2h-1.2zM475.1 555.0h1.2v1.2h-1.2zM475.1 526.4h1.2v1.2h-1.2zM475.1 497.8h1.2v1.2h-1.2zM475.1 469.3h1.2v1.2h-1.2zM475.1 440.7h1.2v1.2h-1.2zM475.1 412.1h1.2v1.2h-1.2zM475.1 383.5h1.2v1.2h-1.2zM475.1 354.9h1.2v1.2h-1.2zM475.1 326.4h1.2v1.2h-1.2zM475.1 297.8h1.2v1.2h-1.2zM475.1 269.2h1.2v1.2h-1.2zM475.1 240.6h1.2v1.2h-1.2zM475.1 212.0h1.2v1.2h-1.2zM475.1 183.5h1.2v1.2h-1.2zM503.7 726.5h1.2v1.2h-1.2zM503.7 697.9h1.2v1.2h-1.2zM503.7 669.3h1.2v1.2h-1.2zM503.7 640.7h1.2v1.2h-1.2zM503.7 612.2h1.2v1.2h-1.2zM503.7 583.6h1.2v1.2h-1.2zM503.7 555.0h1.2v1.2h-1.2zM503.7 526.4h1.2v1.2h-1.2zM503.7 497.8h1.2v1.2h-1.2zM503.7 469.3h1.2v1.2h-1.2zM503.7 440.7h1.2v1.2h-1.2zM503.7 412.1h1.2v1.2h-1.2zM503.7 383.5h1.2v1.2h-1.2zM503.7 354.9h1.2v1.2h-1.2zM503.7 326.4h1.2v1.2h-1.2zM503.7 297.8h1.2v1.2h-1.2zM503.7 269.2h1.2v1.2h-1.2zM503.7 240.6h1.2v1.2h-1.2zM503.7 212.0h1.2v1.2h-1.2zM503.7 183.5h1.2v1.2h-1.2zM532.3 726.5h1.2v1.2h-1.2zM532.3 697.9h1.2v1.2h-1.2zM532.3 669.3h1.2v1.2h-1.2zM532.3 640.7h1.2v1.2h-1.2zM532.3 612.2h1.2v1.2h-1.2zM532.3 583.6h1.2v1.2h-1.2zM532.3 555.0h1.2v1.2h-1.2zM532.3 526.4h1.2v1.2h-1.2zM532.3 497.8h1.2v1.2h-1.2zM532.3 469.3h1.2v1.2h-1.2zM532.3 440.7h1.2v1.2h-1.2zM532.3 412.1h1.2v1.2h-1.2zM532.3 383.5h1.2v1.2h-1.2zM532.3 354.9h1.2v1.2h-1.2zM532.3 326.4h1.2v1.2h-1.2zM532.3 297.8h1.2v1.2h-1.2zM532.3 269.2h1.2v1.2h-1.2zM532.3 240.6h1.2v1.2h-1.2zM532.3 212.0h1.2v1.2h-1.2zM532.3 183.5h1.2v1.2h-1.2zM560.8 726.5h1.2v1.2h-1.2zM560.8 697.9h1.2v1.2h-1.2zM560.8 669.3h1.2v1.2h-1.2zM560.8 640.7h1.2v1.2h-1.2zM560.8 612.2h1.2v1.2h-1.2zM560.8 583.6h1.2v1.2h-1.2zM560.8 555.0h1.2v1.2h-1.2zM560.8 526.4h1.2v1.2h-1.2zM560.8 497.8h1.2v1.2h-1.2zM560.8 469.3h1.2v1.2h-1.2zM560.8 440.7h1.2v1.2h-1.2zM560.8 412.1h1.2v1.2h-1.2zM560.8 383.5h1.2v1.2h-1.2zM560.8 354.9h1.2v1.2h-1.2zM560.8 326.4h1.2v1.2h-1.2zM560.8 297.8h1.2v1.2h-1.2zM560.8 269.2h1.2v1.2h-1.2zM560.8 240.6h1.2v1.2h-1.2zM560.8 212.0h1.2v1.2h-1.2zM560.8 183.5h1.2v1.2h-1.2zM589.4 726.5h1.2v1.2h-1.2zM589.4 697.9h1.2v1.2h-1.2zM589.4 669.3h1.2v1.2h-1.2zM589.4 640.7h1.2v1.2h-1.2zM589.4 612.2h1.2v1.2h-1.2zM589.4 583.6h1.2v1.2h-1.2zM589.4 555.0h1.2v1.2h-1.2zM589.4 526.4h1.2v1.2h-1.2zM589.4 497.8h1.2v1.2h-1.2zM589.4 469.3h1.2v1.2h-1.2zM589.4 440.7h1.2v1.2h-1.2zM589.4 412.1h1.2v1.2h-1.2zM589.4 383.5h1.2v1.2h-1.2zM589.4 354.9h1.2v1.2h-1.2zM589.4 326.4h1.2v1.2h-1.2zM589.4 297.8h1.2v1.2h-1.2zM589.4 269.2h1.2v1.2h-1.2zM589.4 240.6h1.2v1.2h-1.2zM589.4 212.0h1.2v1.2h-1.2zM589.4 183.5h1.2v1.2h-1.2zM618.0 726.5h1.2v1.2h-1.2zM618.0 697.9h1.2v1.2h-1.2zM618.0 669.3h1.2v1.2h-1.2zM618.0 640.7h1.2v1.2h-1.2zM618.0 612.2h1.2v1.2h-1.2zM618.0 583.6h1.2v1.2h-1.2zM618.0 555.0h1.2v1.2h-1.2zM618.0 526.4h1.2v1.2h-1.2zM618.0 497.8h1.2v1.2h-1.2zM618.0 469.3h1.2v1.2h-1.2zM618.0 440.7h1.2v1.2h-1.2zM618.0 412.1h1.2v1.2h-1.2zM618.0 383.5h1.2v1.2h-1.2zM618.0 354.9h1.2v1.2h-1.2zM618.0 326.4h1.2v1.2h-1.2zM618.0 297.8h1.2v1.2h-1.2zM618.0 269.2h1.2v1.2h-1.2zM618.0 240.6h1.2v1.2h-1.2zM618.0 212.0h1.2v1.2h-1.2zM618.0 183.5h1.2v1.2h-1.2zM646.6 726.5h1.2v1.2h-1.2zM646.6 697.9h1.2v1.2h-1.2zM646.6 669.3h1.2v1.2h-1.2zM646.6 640.7h1.2v1.2h-1.2zM646.6 612.2h1.2v1.2h-1.2zM646.6 583.6h1.2v1.2h-1.2zM646.6 555.0h1.2v1.2h-1.2zM646.6 526.4h1.2v1.2h-1.2zM646.6 497.8h1.2v1.2h-1.2zM646.6 469.3h1.2v1.2h-1.2zM646.6 440.7h1.2v1.2h-1.2zM646.6 412.1h1.2v1.2h-1.2zM646.6 383.5h1.2v1.2h-1.2zM646.6 354.9h1.2v1.2h-1.2zM646.6 326.4h1.2v1.2h-1.2zM646.6 297.8h1.2v1.2h-1.2zM646.6 269.2h1.2v1.2h-1.2zM646.6 240.6h1.2v1.2h-1.2zM646.6 212.0h1.2v1.2h-1.2zM646.6 183.5h1.2v1.2h-1.2zM675.2 726.5h1.2v1.2h-1.2zM675.2 697.9h1.2v1.2h-1.2zM675.2 669.3h1.2v1.2h-1.2zM675.2 640.7h1.2v1.2h-1.2zM675.2 612.2h1.2v1.2h-1.2zM675.2 583.6h1.2v1.2h-1.2zM675.2 555.0h1.2v1.2h-1.2zM675.2 526.4h1.2v1.2h-1.2zM675.2 497.8h1.2v1.2h-1.2zM675.2 469.3h1.2v1.2h-1.2zM675.2 440.7h1.2v1.2h-1.2zM675.2 412.1h1.2v1.2h-1.2zM675.2 383.5h1.2v1.2h-1.2zM675.2 354.9h1.2v1.2h-1.2zM675.2 326.4h1.2v1.2h-1.2zM675.2 297.8h1.2v1.2h-1.2zM675.2 269.2h1.2v1.2h-1.2zM675.2 240.6h1.2v1.2h-1.2zM675.2 212.0h1.2v1.2h-1.2zM675.2 183.5h1.2v1.2h-1.2zM703.7 726.5h1.2v1.2h-1.2zM703.7 697.9h1.2v1.2h-1.2zM703.7 669.3h1.2v1.2h-1.2zM703.7 640.7h1.2v1.2h-1.2zM703.7 612.2h1.2v1.2h-1.2zM703.7 583.6h1.2v1.2h-1.2zM703.7 555.0h1.2v1.2h-1.2zM703.7 526.4h1.2v1.2h-1.2zM703.7 497.8h1.2v1.2h-1.2zM703.7 469.3h1.2v1.2h-1.2zM703.7 440.7h1.2v1.2h-1.2zM703.7 412.1h1.2v1.2h-1.2zM703.7 383.5h1.2v1.2h-1.2zM703.7 354.9h1.2v1.2h-1.2zM703.7 326.4h1.2v1.2h-1.2zM703.7 297.8h1.2v1.2h-1.2zM703.7 269.2h1.2v1.2h-1.2zM703.7 240.6h1.2v1.2h-1.2zM703.7 212.0h1.2v1.2h-1.2zM703.7 183.5h1.2v1.2h-1.2zM732.3 726.5h1.2v1.2h-1.2zM732.3 697.9h1.2v1.2h-1.2zM732.3 669.3h1.2v1.2h-1.2zM732.3 640.7h1.2v1.2h-1.2zM732.3 612.2h1.2v1.2h-1.2zM732.3 583.6h1.2v1.2h-1.2zM732.3 555.0h1.2v1.2h-1.2zM732.3 526.4h1.2v1.2h-1.2zM732.3 497.8h1.2v1.2h-1.2zM732.3 469.3h1.2v1.2h-1.2zM732.3 440.7h1.2v1.2h-1.2zM732.3 412.1h1.2v1.2h-1.2zM732.3 383.5h1.2v1.2h-1.2zM732.3 354.9h1.2v1.2h-1.2zM732.3 326.4h1.2v1.2h-1.2zM732.3 297.8h1.2v1.2h-1.2zM732.3 269.2h1.2v1.2h-1.2zM732.3 240.6h1.2v1.2h-1.2zM732.3 212.0h1.2v1.2h-1.2zM732.3 183.5h1.2v1.2h-1.2zM760.9 726.5h1.2v1.2h-1.2zM760.9 697.9h1.2v1.2h-1.2zM760.9 669.3h1.2v1.2h-1.2zM760.9 640.7h1.2v1.2h-1.2zM760.9 612.2h1.2v1.2h-1.2zM760.9 583.6h1.2v1.2h-1.2zM760.9 555.0h1.2v1.2h-1.2zM760.9 526.4h1.2v1.2h-1.2zM760.9 497.8h1.2v1.2h-1.2zM760.9 469.3h1.2v1.2h-1.2zM760.9 440.7h1.2v1.2h-1.2zM760.9 412.1h1.2v1.2h-1.2zM760.9 383.5h1.2v1.2h-1.2zM760.9 354.9h1.2v1.2h-1.2zM760.9 326.4h1.2v1.2h-1.2zM760.9 297.8h1.2v1.2h-1.2zM760.9 269.2h1.2v1.2h-1.2zM760.9 240.6h1.2v1.2h-1.2zM760.9 212.0h1.2v1.2h-1.2zM760.9 183.5h1.2v1.2h-1.2zM789.5 726.5h1.2v1.2h-1.2zM789.5 697.9h1.2v1.2h-1.2zM789.5 669.3h1.2v1.2h-1.2zM789.5 640.7h1.2v1.2h-1.2zM789.5 612.2h1.2v1.2h-1.2zM789.5 583.6h1.2v1.2h-1.2zM789.5 555.0h1.2v1.2h-1.2zM789.5 526.4h1.2v1.2h-1.2zM789.5 497.8h1.2v1.2h-1.2zM789.5 469.3h1.2v1.2h-1.2zM789.5 440.7h1.2v1.2h-1.2zM789.5 412.1h1.2v1.2h-1.2zM789.5 383.5h1.2v1.2h-1.2zM789.5 354.9h1.2v1.2h-1.2zM789.5 326.4h1.2v1.2h-1.2zM789.5 297.8h1.2v1.2h-1.2zM789.5 269.2h1.2v1.2h-1.2zM789.5 240.6h1.2v1.2h-1.2zM789.5 212.0h1.2v1.2h-1.2zM789.5 183.5h1.2v1.2h-1.2zM818.1 726.5h1.2v1.2h-1.2zM818.1 697.9h1.2v1.2h-1.2zM818.1 669.3h1.2v1.2h-1.2zM818.1 640.7h1.2v1.2h-1.2zM818.1 612.2h1.2v1.2h-1.2zM818.1 583.6h1.2v1.2h-1.2zM818.1 555.0h1.2v1.2h-1.2zM818.1 526.4h1.2v1.2h-1.2zM818.1 497.8h1.2v1.2h-1.2zM818.1 469.3h1.2v1.2h-1.2zM818.1 440.7h1.2v1.2h-1.2zM818.1 412.1h1.2v1.2h-1.2zM818.1 383.5h1.2v1.2h-1.2zM818.1 354.9h1.2v1.2h-1.2zM818.1 326.4h1.2v1.2h-1.2zM818.1 297.8h1.2v1.2h-1.2zM818.1 269.2h1.2v1.2h-1.2zM818.1 240.6h1.2v1.2h-1.2zM818.1 212.0h1.2v1.2h-1.2zM818.1 183.5h1.2v1.2h-1.2zM846.6 726.5h1.2v1.2h-1.2zM846.6 697.9h1.2v1.2h-1.2zM846.6 669.3h1.2v1.2h-1.2zM846.6 640.7h1.2v1.2h-1.2zM846.6 612.2h1.2v1.2h-1.2zM846.6 583.6h1.2v1.2h-1.2zM846.6 555.0h1.2v1.2h-1.2zM846.6 526.4h1.2v1.2h-1.2zM846.6 497.8h1.2v1.2h-1.2zM846.6 469.3h1.2v1.2h-1.2zM846.6 440.7h1.2v1.2h-1.2zM846.6 412.1h1.2v1.2h-1.2zM846.6 383.5h1.2v1.2h-1.2zM846.6 354.9h1.2v1.2h-1.2zM846.6 326.4h1.2v1.2h-1.2zM846.6 297.8h1.2v1.2h-1.2zM846.6 269.2h1.2v1.2h-1.2zM846.6 240.6h1.2v1.2h-1.2zM846.6 212.0h1.2v1.2h-1.2zM846.6 183.5h1.2v1.2h-1.2zM875.2 726.5h1.2v1.2h-1.2zM875.2 697.9h1.2v1.2h-1.2zM875.2 669.3h1.2v1.2h-1.2zM875.2 640.7h1.2v1.2h-1.2zM875.2 612.2h1.2v1.2h-1.2zM875.2 583.6h1.2v1.2h-1.2zM875.2 555.0h1.2v1.2h-1.2zM875.2 526.4h1.2v1.2h-1.2zM875.2 497.8h1.2v1.2h-1.2zM875.2 469.3h1.2v1.2h-1.2zM875.2 440.7h1.2v1.2h-1.2zM875.2 412.1h1.2v1.2h-1.2zM875.2 383.5h1.2v1.2h-1.2zM875.2 354.9h1.2v1.2h-1.2zM875.2 326.4h1.2v1.2h-1.2zM875.2 297.8h1.2v1.2h-1.2zM875.2 269.2h1.2v1.2h-1.2zM875.2 240.6h1.2v1.2h-1.2zM875.2 212.0h1.2v1.2h-1.2zM875.2 183.5h1.2v1.2h-1.2zM903.8 726.5h1.2v1.2h-1.2zM903.8 697.9h1.2v1.2h-1.2zM903.8 669.3h1.2v1.2h-1.2zM903.8 640.7h1.2v1.2h-1.2zM903.8 612.2h1.2v1.2h-1.2zM903.8 583.6h1.2v1.2h-1.2zM903.8 555.0h1.2v1.2h-1.2zM903.8 526.4h1.2v1.2h-1.2zM903.8 497.8h1.2v1.2h-1.2zM903.8 469.3h1.2v1.2h-1.2zM903.8 440.7h1.2v1.2h-1.2zM903.8 412.1h1.2v1.2h-1.2zM903.8 383.5h1.2v1.2h-1.2zM903.8 354.9h1.2v1.2h-1.2zM903.8 326.4h1.2v1.2h-1.2zM903.8 297.8h1.2v1.2h-1.2zM903.8 269.2h1.2v1.2h-1.2zM903.8 240.6h1.2v1.2h-1.2zM903.8 212.0h1.2v1.2h-1.2zM903.8 183.5h1.2v1.2h-1.2zM932.4 726.5h1.2v1.2h-1.2zM932.4 697.9h1.2v1.2h-1.2zM932.4 669.3h1.2v1.2h-1.2zM932.4 640.7h1.2v1.2h-1.2zM932.4 612.2h1.2v1.2h-1.2zM932.4 583.6h1.2v1.2h-1.2zM932.4 555.0h1.2v1.2h-1.2zM932.4 526.4h1.2v1.2h-1.2zM932.4 497.8h1.2v1.2h-1.2zM932.4 469.3h1.2v1.2h-1.2zM932.4 440.7h1.2v1.2h-1.2zM932.4 412.1h1.2v1.2h-1.2zM932.4 383.5h1.2v1.2h-1.2zM932.4 354.9h1.2v1.2h-1.2zM932.4 326.4h1.2v1.2h-1.2zM932.4 297.8h1.2v1.2h-1.2zM932.4 269.2h1.2v1.2h-1.2zM932.4 240.6h1.2v1.2h-1.2zM932.4 212.0h1.2v1.2h-1.2zM932.4 183.5h1.2v1.2h-1.2zM961.0 726.5h1.2v1.2h-1.2zM961.0 697.9h1.2v1.2h-1.2zM961.0 669.3h1.2v1.2h-1.2zM961.0 640.7h1.2v1.2h-1.2zM961.0 612.2h1.2v1.2h-1.2zM961.0 583.6h1.2v1.2h-1.2zM961.0 555.0h1.2v1.2h-1.2zM961.0 526.4h1.2v1.2h-1.2zM961.0 497.8h1.2v1.2h-1.2zM961.0 469.3h1.2v1.2h-1.2zM961.0 440.7h1.2v1.2h-1.2zM961.0 412.1h1.2v1.2h-1.2zM961.0 383.5h1.2v1.2h-1.2zM961.0 354.9h1.2v1.2h-1.2zM961.0 326.4h1.2v1.2h-1.2zM961.0 297.8h1.2v1.2h-1.2zM961.0 269.2h1.2v1.2h-1.2zM961.0 240.6h1.2v1.2h-1.2zM961.0 212.0h1.2v1.2h-1.2zM961.0 183.5h1.2v1.2h-1.2zM989.5 726.5h1.2v1.2h-1.2zM989.5 697.9h1.2v1.2h-1.2zM989.5 669.3h1.2v1.2h-1.2zM989.5 640.7h1.2v1.2h-1.2zM989.5 612.2h1.2v1.2h-1.2zM989.5 583.6h1.2v1.2h-1.2zM989.5 555.0h1.2v1.2h-1.2zM989.5 526.4h1.2v1.2h-1.2zM989.5 497.8h1.2v1.2h-1.2zM989.5 469.3h1.2v1.2h-1.2zM989.5 440.7h1.2v1.2h-1.2zM989.5 412.1h1.2v1.2h-1.2zM989.5 383.5h1.2v1.2h-1.2zM989.5 354.9h1.2v1.2h-1.2zM989.5 326.4h1.2v1.2h-1.2zM989.5 297.8h1.2v1.2h-1.2zM989.5 269.2h1.2v1.2h-1.2zM989.5 240.6h1.2v1.2h-1.2zM989.5 212.0h1.2v1.2h-1.2zM989.5 183.5h1.2v1.2h-1.2zM1018.1 726.5h1.2v1.2h-1.2zM1018.1 697.9h1.2v1.2h-1.2zM1018.1 669.3h1.2v1.2h-1.2zM1018.1 640.7h1.2v1.2h-1.2zM1018.1 612.2h1.2v1.2h-1.2zM1018.1 583.6h1.2v1.2h-1.2zM1018.1 555.0h1.2v1.2h-1.2zM1018.1 526.4h1.2v1.2h-1.2zM1018.1 497.8h1.2v1.2h-1.2zM1018.1 469.3h1.2v1.2h-1.2zM1018.1 440.7h1.2v1.2h-1.2zM1018.1 412.1h1.2v1.2h-1.2zM1018.1 383.5h1.2v1.2h-1.2zM1018.1 354.9h1.2v1.2h-1.2zM1018.1 326.4h1.2v1.2h-1.2zM1018.1 297.8h1.2v1.2h-1.2zM1018.1 269.2h1.2v1.2h-1.2zM1018.1 240.6h1.2v1.2h-1.2zM1018.1 212.0h1.2v1.2h-1.2zM1018.1 183.5h1.2v1.2h-1.2zM1046.7 726.5h1.2v1.2h-1.2zM1046.7 697.9h1.2v1.2h-1.2zM1046.7 669.3h1.2v1.2h-1.2zM1046.7 640.7h1.2v1.2h-1.2zM1046.7 612.2h1.2v1.2h-1.2zM1046.7 583.6h1.2v1.2h-1.2zM1046.7 555.0h1.2v1.2h-1.2zM1046.7 526.4h1.2v1.2h-1.2zM1046.7 497.8h1.2v1.2h-1.2zM1046.7 469.3h1.2v1.2h-1.2zM1046.7 440.7h1.2v1.2h-1.2zM1046.7 412.1h1.2v1.2h-1.2zM1046.7 383.5h1.2v1.2h-1.2zM1046.7 354.9h1.2v1.2h-1.2zM1046.7 326.4h1.2v1.2h-1.2zM1046.7 297.8h1.2v1.2h-1.2zM1046.7 269.2h1.2v1.2h-1.2zM1046.7 240.6h1.2v1.2h-1.2zM1046.7 212.0h1.2v1.2h-1.2zM1046.7 183.5h1.2v1.2h-1.2zM1075.3 726.5h1.2v1.2h-1.2zM1075.3 697.9h1.2v1.2h-1.2zM1075.3 669.3h1.2v1.2h-1.2zM1075.3 640.7h1.2v1.2h-1.2zM1075.3 612.2h1.2v1.2h-1.2zM1075.3 583.6h1.2v1.2h-1.2zM1075.3 555.0h1.2v1.2h-1.2zM1075.3 526.4h1.2v1.2h-1.2zM1075.3 497.8h1.2v1.2h-1.2zM1075.3 469.3h1.2v1.2h-1.2zM1075.3 440.7h1.2v1.2h-1.2zM1075.3 412.1h1.2v1.2h-1.2zM1075.3 383.5h1.2v1.2h-1.2zM1075.3 354.9h1.2v1.2h-1.2zM1075.3 326.4h1.2v1.2h-1.2zM1075.3 297.8h1.2v1.2h-1.2zM1075.3 269.2h1.2v1.2h-1.2zM1075.3 240.6h1.2v1.2h-1.2zM1075.3 212.0h1.2v1.2h-1.2zM1075.3 183.5h1.2v1.2h-1.2zM1103.9 726.5h1.2v1.2h-1.2zM1103.9 697.9h1.2v1.2h-1.2zM1103.9 669.3h1.2v1.2h-1.2zM1103.9 640.7h1.2v1.2h-1.2zM1103.9 612.2h1.2v1.2h-1.2zM1103.9 583.6h1.2v1.2h-1.2zM1103.9 555.0h1.2v1.2h-1.2zM1103.9 526.4h1.2v1.2h-1.2zM1103.9 497.8h1.2v1.2h-1.2zM1103.9 469.3h1.2v1.2h-1.2zM1103.9 440.7h1.2v1.2h-1.2zM1103.9 412.1h1.2v1.2h-1.2zM1103.9 383.5h1.2v1.2h-1.2zM1103.9 354.9h1.2v1.2h-1.2zM1103.9 326.4h1.2v1.2h-1.2zM1103.9 297.8h1.2v1.2h-1.2zM1103.9 269.2h1.2v1.2h-1.2zM1103.9 240.6h1.2v1.2h-1.2zM1103.9 212.0h1.2v1.2h-1.2zM1103.9 183.5h1.2v1.2h-1.2zM1132.4 726.5h1.2v1.2h-1.2zM1132.4 697.9h1.2v1.2h-1.2zM1132.4 669.3h1.2v1.2h-1.2zM1132.4 640.7h1.2v1.2h-1.2zM1132.4 612.2h1.2v1.2h-1.2zM1132.4 583.6h1.2v1.2h-1.2zM1132.4 555.0h1.2v1.2h-1.2zM1132.4 526.4h1.2v1.2h-1.2zM1132.4 497.8h1.2v1.2h-1.2zM1132.4 469.3h1.2v1.2h-1.2zM1132.4 440.7h1.2v1.2h-1.2zM1132.4 412.1h1.2v1.2h-1.2zM1132.4 383.5h1.2v1.2h-1.2zM1132.4 354.9h1.2v1.2h-1.2zM1132.4 326.4h1.2v1.2h-1.2zM1132.4 297.8h1.2v1.2h-1.2zM1132.4 269.2h1.2v1.2h-1.2zM1132.4 240.6h1.2v1.2h-1.2zM1132.4 212.0h1.2v1.2h-1.2zM1132.4 183.5h1.2v1.2h-1.2z" fill="#444"/><g fill="none" stroke-linejoin="round"><path d="M510.0 280.7 L591.7 290.2 L599.4 298.5 L598.8 301.2 L603.9 301.7 L604.1 310.4 M510.0 280.7 L507.2 301.5 L566.2 308.0 L566.8 309.5 L597.0 313.1 L597.6 318.1 L568.6 314.7 L567.4 313.3 L505.2 306.8 L503.4 319.2 M607.1 269.5 L607.7 273.6 L616.6 274.8 L615.4 284.9 L623.7 285.5 L623.1 296.1 L625.0 296.7 M602.4 310.4 L619.5 311.5 L617.8 326.9 L601.2 325.2 L602.4 310.4 M611.8 302.7 L625.0 303.8 M611.8 302.7 L611.3 310.9 M537.8 341.8 L625.0 352.4 M446.4 380.2 L475.0 382.6 M413.9 430.6 L475.0 435.9 M485.1 384.4 L542.5 390.9 L555.6 392.9 L582.2 395.3 L625.0 401.2 M587.0 369.5 L624.3 374.9 L621.3 400.4 M587.0 369.5 L585.8 380.8 L584.0 381.4 L582.2 395.0 M572.7 394.4 L571.0 405.7 M615.4 404.5 L625.0 406.3 M479.1 388.5 L491.0 390.9 L490.4 398.0 L485.1 398.6 L480.9 430.6 L546.1 439.5 L550.8 403.9 L548.5 403.3 L548.5 396.8 L560.9 398.6 L561.5 407.5 L554.4 406.3 L550.2 438.9 L614.8 447.2 L618.4 411.6 L615.4 410.4 L616.0 400.4 M475.0 435.9 L581.6 448.3 M442.3 521.8 L455.3 534.8 M407.9 501.0 L423.3 507.5 M445.9 504.6 L475.0 493.3 M475.0 493.3 L573.9 470.2 M582.8 467.8 L625.0 457.8 M587.6 489.8 L625.0 493.9 M592.3 501.0 L620.7 504.6 L620.1 512.3 L606.5 511.1 L607.1 502.8 M591.1 501.0 L589.9 518.8 L601.8 520.6 L600.6 534.8 L625.0 538.3 M611.3 492.7 L610.1 502.8 M624.3 493.3 L622.5 513.5 M449.4 530.0 L455.3 533.6 M490.4 586.9 L497.5 578.6 L625.0 586.3 M598.2 590.4 L625.0 592.8 M600.0 530.0 L600.6 534.7 L625.0 538.3 M606.9 270.0 L607.6 273.9 L616.7 274.6 L615.4 285.0 L623.2 285.6 L622.6 296.7 L640.2 297.4 L650.6 294.1 L668.9 279.1 L661.7 270.0 M611.5 303.2 L640.2 305.2 L653.2 301.3 L673.4 285.6 L705.4 326.1 L711.2 323.4 L683.2 288.2 L706.0 270.0 M668.9 279.1 L670.2 270.0 L672.1 272.6 L674.1 270.0 L681.9 279.8 L693.6 270.0 M575.0 288.2 L590.6 289.6 L599.1 300.0 L603.7 300.6 L602.4 324.8 L618.0 326.7 L619.3 311.7 L611.5 311.1 L611.5 303.2 M575.0 310.4 L597.8 313.7 L597.2 318.2 L575.0 316.3 M575.0 346.3 L651.3 355.4 L650.6 365.0 M741.9 270.0 L745.0 273.3 M770.0 341.0 L768.0 365.0 M775.2 328.0 L775.9 339.7 M777.8 336.5 L814.3 339.7 L816.9 333.2 L834.5 334.5 L834.5 339.7 M817.6 292.8 L833.9 294.8 L830.0 333.9 M817.6 292.8 L815.6 309.8 L819.5 310.4 L816.9 333.2 M867.1 286.3 L869.1 279.1 L897.8 283.0 L896.5 273.3 L891.2 270.6 M857.3 285.6 L882.1 288.2 L878.9 313.7 L854.7 311.1 L857.3 285.6 M882.1 285.6 L894.5 286.3 M880.2 308.5 L884.7 309.1 L883.4 322.1 L870.4 320.2 L870.4 313.0 M863.2 312.4 L862.6 325.4 L876.2 326.7 L876.2 322.1 M875.6 326.7 L874.9 330.6 L883.4 338.4 L888.6 345.0 L888.6 365.0 M884.7 315.6 L891.9 311.7 M783.0 365.0 L785.0 351.5 L801.3 353.4 L801.9 348.2 L810.4 349.5 L809.1 354.1 L838.4 354.1 L837.8 365.0 M853.4 365.0 L853.4 358.0 L883.4 360.0 L888.6 354.7 M862.6 356.7 L861.9 365.0 M878.2 359.3 L877.5 365.0 M600.0 371.3 L624.8 374.6 L621.5 400.6 L600.0 398.0 M615.6 400.6 L629.3 401.9 L628.7 406.5 L615.0 405.2 M631.9 386.3 L647.6 388.9 L643.7 420.2 L651.5 421.5 L648.2 445.0 L651.5 446.3 M631.9 386.3 L628.0 418.9 M651.5 355.0 L647.6 388.9 M618.3 411.1 L614.3 446.3 M676.9 365.4 L736.9 371.9 L733.0 427.4 M676.9 365.4 L670.4 422.8 L706.9 428.0 L706.3 433.2 M673.7 393.5 L685.4 394.8 L684.7 398.0 M673.7 396.7 L733.0 403.2 M708.2 396.1 L716.0 397.4 L715.4 401.3 M721.9 398.7 L733.0 400.0 M619.6 459.3 L770.0 425.4 M769.5 355.0 L759.7 420.2 M721.3 451.5 L723.9 456.7 L721.9 465.0 M742.8 458.7 L770.0 461.3 M767.2 355.0 L760.7 417.6 M784.8 355.0 L782.8 377.8 L835.6 382.4 L838.2 355.0 M853.9 357.6 L849.3 386.3 L874.7 389.6 L878.0 358.9 L853.9 357.6 M863.0 357.6 L862.3 367.4 L876.7 369.3 M878.0 358.9 L883.9 359.6 L888.4 355.7 L885.8 386.9 L882.6 420.2 M875.4 385.6 L885.8 386.9 M780.9 417.6 L781.5 412.4 L815.4 410.4 L816.1 415.6 M806.9 437.1 L806.3 443.7 L774.3 446.3 L773.7 461.9 L760.0 461.3 M775.0 451.5 L800.4 454.1 L798.5 465.0 M812.2 437.1 L814.8 455.4 L829.1 461.3 L828.4 465.0 M823.9 437.1 L825.2 451.5 L831.1 454.1 L830.4 465.0 M838.2 437.1 L837.6 448.2 L866.9 455.4 L865.6 465.0 M887.1 448.9 L898.2 450.8 M580.0 468.0 L637.4 455.0 M587.8 489.6 L701.3 501.9 L750.0 507.2 M611.3 492.8 L610.0 502.6 M625.6 494.1 L622.4 513.0 M591.7 501.3 L620.4 504.5 L619.8 512.4 L633.5 515.0 L632.2 526.1 L628.9 526.1 L626.9 538.4 L600.9 535.2 L601.5 520.2 L590.4 518.9 L591.7 501.3 M606.7 503.2 L606.1 511.1 L619.8 512.4 M642.6 500.6 L666.7 503.9 L665.4 517.6 L673.9 518.9 L673.2 524.1 L683.0 526.1 L679.7 556.0 L668.7 554.7 L670.0 542.4 L666.0 541.7 L664.7 544.3 L652.4 542.4 L654.3 522.8 L664.7 523.4 L665.4 517.6 M673.9 524.1 L698.6 527.4 L703.2 506.5 M710.4 455.0 L722.1 455.0 L721.5 463.5 L743.0 465.4 L743.0 458.9 L750.0 458.9 M721.5 463.5 L711.0 464.1 L709.1 483.0 L714.3 485.6 L746.9 489.6 L747.5 486.3 M715.6 513.7 L745.6 516.3 L746.9 519.5 L750.0 519.5 M715.6 513.7 L713.6 528.7 L701.9 526.7 M710.4 528.7 L708.4 543.0 L733.8 545.6 L734.5 540.4 L750.0 541.7 M724.7 533.2 L750.0 535.8 M723.4 533.2 L723.4 543.7 M740.0 464.8 L742.6 458.9 L775.2 461.5 L775.9 455.0 M759.6 460.9 L756.3 486.9 L746.5 486.3 L745.9 488.9 L740.0 488.2 M800.6 455.0 L794.8 480.4 L792.8 490.2 L756.3 486.9 M815.6 455.0 L818.2 458.3 L830.0 460.9 L826.7 473.9 L845.6 477.8 L846.3 479.8 L862.6 483.0 L867.1 455.0 M740.0 506.5 L820.8 515.0 L823.4 516.9 L820.8 545.0 L833.9 546.3 L831.3 556.0 L841.7 556.7 L842.3 552.8 L854.7 554.1 L855.4 548.2 L869.1 549.5 L867.8 557.3 L874.3 558.7 M740.0 511.1 L746.5 511.7 L746.5 518.9 L757.6 520.2 L755.6 537.1 L740.0 534.5 M740.0 540.4 L752.4 541.7 L751.7 543.7 M740.0 516.9 L746.5 516.9 M772.6 513.7 L776.5 518.9 L768.0 552.1 L777.2 553.4 L776.5 552.1 L792.2 553.4 L792.8 541.7 L815.0 543.0 L815.6 526.1 L805.8 525.4 L806.5 522.8 L799.3 522.8 L799.3 524.8 L776.5 519.5 L772.6 513.7 M836.5 525.4 L875.6 530.0 L878.2 513.0 L882.1 504.5 L898.4 506.5 M836.5 525.4 L833.9 546.3 M826.0 532.6 L833.9 531.9 M826.0 532.6 L824.7 545.0 M861.3 529.3 L863.2 532.6 L867.1 532.6 L867.8 530.6 M893.8 482.4 L898.4 490.2 M893.8 482.4 L897.8 490.9 M897.8 511.1 L891.9 517.6 L898.4 524.1 M878.2 546.3 L898.4 548.2 M889.9 565.0 L898.4 560.6 L899.1 565.0 M580.0 583.2 L692.1 591.1 L744.3 594.3 L750.0 595.0 M598.9 590.4 L629.5 592.4 L629.5 598.2 L639.3 599.5 L639.3 603.5 L690.8 606.7 M634.1 587.8 L639.3 596.9 L673.9 598.9 L673.2 606.1 M667.4 605.4 L666.0 618.4 M673.2 606.1 L672.6 618.4 M698.0 598.2 L701.3 596.3 L705.8 596.3 L709.1 600.2 L708.4 611.3 L705.2 615.2 L699.9 615.2 L696.7 611.3 L698.0 598.2 M744.3 594.3 L743.6 604.1 L750.0 605.4 M733.2 604.8 L743.6 604.1 M733.2 604.8 L724.1 618.4 M729.3 612.6 L726.7 618.4 M668.7 550.0 L668.0 554.6 L679.7 555.9 L681.0 550.0 M780.4 589.1 L777.2 618.4 M740.0 594.3 L744.6 595.0 L744.6 604.1 L740.0 603.5 M744.6 596.9 L760.9 598.2 L760.2 606.1 L759.6 618.4 M740.0 604.1 L760.2 606.1 M805.2 579.3 L812.4 580.6 L811.7 589.1 L804.5 588.5 L805.2 579.3 M898.4 581.3 L885.4 567.6 L894.5 560.4 L897.8 564.3 L897.8 561.1 M884.1 617.8 L887.3 617.1 L898.4 618.4 M741.3 270.0 Q768.7 298.0 770.0 341.0 M747.8 270.0 Q773.2 298.0 775.2 328.0 M760.0 427.4 Q825.2 417.6 898.2 428.7" stroke="#d0d0d0" stroke-width="1"/><path d="M494.5 318.1 L625.0 333.5 M414.5 432.3 L475.0 438.3 M475.0 437.7 L581.6 450.0 M491.6 483.8 L625.0 452.4 M593.5 480.9 L606.5 482.7 M613.6 475.0 L625.0 472.0 M613.6 483.8 L625.0 484.4 M579.3 574.4 L625.0 578.0 M634.3 270.0 L627.8 333.9 M575.0 327.4 L627.8 333.9 L664.3 337.8 L665.0 329.3 L745.0 338.4 M664.3 337.8 L660.4 365.0 M785.6 270.0 L774.6 365.0 M740.0 337.1 L767.4 340.4 L764.1 365.0 M842.3 270.0 L834.5 334.5 L888.6 345.0 L897.1 345.6 M843.0 335.8 L839.7 365.0 M850.2 270.0 L897.8 275.9 M898.4 281.1 L888.6 345.0 M898.4 338.4 L895.8 365.0 M661.3 355.0 L650.8 446.3 M600.0 451.5 L618.3 454.1 L770.0 418.9 M658.7 465.0 L770.0 439.7 M765.6 355.0 L757.8 422.1 M770.0 400.6 L768.2 418.9 M765.2 355.0 L760.0 398.0 M775.6 355.0 L767.8 420.2 M841.5 355.0 L836.3 416.9 M896.9 355.0 L890.4 422.1 M810.2 436.5 L807.6 465.0 M887.8 442.4 L885.2 465.0 M613.9 475.2 L702.6 455.0 M595.0 481.7 L642.6 486.3 L702.6 492.8 L750.0 498.0 M642.6 486.3 L634.8 565.0 M702.6 492.8 L694.7 565.0 M808.4 455.0 L803.2 503.9 M886.7 455.0 L879.5 511.7 L874.3 565.0 M740.0 496.7 L803.2 503.9 L822.1 505.8 L879.5 511.7 M822.1 505.8 L815.6 565.0 M761.5 499.3 L756.3 565.0 M878.2 522.1 L898.4 524.1 M580.0 574.1 L633.5 578.0 L693.4 582.6 L750.0 586.5 M636.1 550.0 L633.5 578.0 M696.7 550.0 L690.2 618.4 M756.3 550.0 L753.0 586.5 M740.0 585.2 L786.3 589.1 L812.4 590.4 L871.7 595.0 M817.6 550.0 L812.4 590.4 M876.2 550.0 L873.0 579.3 L871.7 595.0 L869.1 618.4 M873.0 579.3 L898.4 581.3 M786.3 589.1 L782.4 618.4 M760.0 421.5 Q825.2 409.8 898.2 422.8 M760.0 441.7 Q818.7 430.6 898.2 443.7" stroke="#10d0e0" stroke-width="1.1"/><path d="M372.4 294.4 L449.4 302.1 M349.9 299.7 L433.4 308.6 M348.7 309.2 L421.0 316.6 M449.4 302.1 L467.2 270.1 M421.0 316.6 L413.3 337.3 L411.7 343.9 L409.4 350.6 M360.5 270.1 L359.6 278.4 L359.4 286.7 M372.2 270.1 L371.0 281.9 M421.2 352.4 L443.5 313.3 M471.9 315.7 L471.9 324.6 L471.3 334.1 M514.1 274.2 L589.3 282.5 M475.0 334.1 L530.7 341.8 M475.0 338.2 L554.4 347.7 M536.0 326.9 L584.0 332.9 M584.0 332.9 L582.8 344.7 L581.6 356.6 M557.9 353.6 L581.6 356.6 M336.3 380.2 L378.3 385.0 M336.8 391.5 L389.0 397.4 M351.7 407.5 L387.8 410.4 M351.7 414.0 L375.9 416.4 M346.9 416.4 L346.9 426.4 L345.7 439.5 M379.5 416.4 L378.3 429.4 L377.1 441.8 M383.1 354.7 L381.9 369.5 L380.7 385.0 M401.4 416.4 L398.5 450.0 M414.5 423.5 L443.5 427.0 L470.7 429.4 M424.5 392.7 L422.2 414.0 M472.5 407.5 L472.5 416.4 M485.1 357.7 L483.3 371.3 L482.1 384.4 L479.7 397.4 L478.6 412.8 L476.8 431.2 M517.1 361.3 L554.4 366.0 L553.2 379.6 L552.0 390.3 M492.8 404.5 L492.8 412.8 L490.4 424.6 M543.7 405.7 L543.1 416.4 L540.8 427.0 M563.3 411.6 L562.7 420.5 L560.3 432.3 M501.1 425.8 L540.2 428.8 M516.5 434.7 L539.0 437.1 M586.4 437.1 L610.1 437.1 M585.2 443.6 L609.5 444.8 M341.6 489.8 L381.9 495.7 M346.9 502.8 L383.1 508.7 M396.1 459.0 L393.7 487.4 M405.6 464.9 L403.8 488.6 M409.1 490.9 L438.7 493.3 M424.5 466.7 L475.0 469.6 M441.1 469.6 L440.5 490.9 M400.8 515.8 L400.8 540.0 M422.2 522.9 L438.7 538.3 M460.1 517.0 L467.8 511.1 L473.7 508.1 M475.0 469.6 L486.3 469.6 M479.7 506.4 L543.7 492.1 L583.4 489.2 M523.6 506.4 L522.4 518.2 L521.2 530.6 M521.2 531.2 L556.8 534.8 M583.4 490.9 L579.3 531.2 L578.1 540.0 M571.0 508.7 L570.4 521.8 L569.8 524.7 M562.1 527.7 L579.3 529.5 M400.8 530.0 L402.0 618.3 M411.5 571.5 L380.7 602.9 L379.5 610.6 L377.7 618.3 M415.0 570.9 L447.0 568.5 M410.3 573.8 L409.1 602.3 L407.3 611.8 M415.0 590.4 L438.7 596.9 M415.0 594.0 L438.7 597.5 M407.9 612.9 L425.1 615.3 M438.7 530.0 L455.9 536.5 L475.0 567.9 M434.0 534.7 L447.0 551.3 L455.3 563.8 L462.4 573.2 L470.1 582.1 L475.0 591.6 M438.2 601.1 L436.4 616.5 M449.4 596.4 L446.4 618.3 M442.9 601.1 L441.1 617.7 M478.6 567.9 L575.1 574.4 M576.3 572.7 L579.3 534.7 M478.6 571.5 L494.5 618.3 M486.8 582.1 L511.7 618.3 M572.7 594.6 L572.2 616.5 M591.1 617.7 L608.3 618.3 M583.3 492.8 L582.0 533.2 M587.2 617.1 L608.0 618.4" stroke="#c01a1a" stroke-width="1"/></g><text x="348.7" y="464.3" font-size="10" fill="#d01818" letter-spacing="-0.3">2536</text><text x="448.8" y="458.4" font-size="10" fill="#d01818" letter-spacing="-0.3">1329</text><text x="386.6" y="515.8" font-size="10" fill="#d01818" letter-spacing="-0.3">52562236</text><text x="581.6" y="463.1" font-size="10" fill="#e07010" letter-spacing="-0.3">52563692</text><text x="466.0" y="618.3" font-size="10" fill="#d01818" letter-spacing="-0.3">153</text><text x="489.2" y="544.2" font-size="10" fill="#d01818" letter-spacing="-0.3">1753</text><text x="550.2" y="608.8" font-size="10" fill="#d01818" letter-spacing="-0.3">575</text><text x="599.4" y="559.6" font-size="10" fill="#e8e800" letter-spacing="-0.3">1705</text><text x="718.4" y="298.7" font-size="10" fill="#e8e800" letter-spacing="-0.3">445</text><text x="641.5" y="350.2" font-size="10" fill="#e8e800" letter-spacing="-0.3">548</text><text x="708.0" y="358.7" font-size="10" fill="#e8e800" letter-spacing="-0.3">1931</text><text x="841.7" y="326.7" font-size="10" fill="#e8e800" letter-spacing="-0.3">2360</text><text x="673.0" y="455.4" font-size="10" fill="#c8c8c8" letter-spacing="-0.3" transform="rotate(-12.0 673.0 455.4)">Magna&#160;&#160;Aliqua</text><text x="626.1" y="464.5" font-size="10" fill="#e8e800" letter-spacing="-0.3" transform="rotate(-12.0 626.1 464.5)">43505</text><text x="773.0" y="430.6" font-size="10" fill="#e07010" letter-spacing="-0.3">52563693</text><text x="852.6" y="432.6" font-size="10" fill="#e07010" letter-spacing="-0.3">52563694</text><text x="855.2" y="408.5" font-size="10" fill="#e8e800" letter-spacing="-0.3">1614</text><text x="664.1" y="479.8" font-size="10" fill="#e8e800" letter-spacing="-0.3">1612</text><text x="703.2" y="502.6" font-size="10" fill="#b8b8b8" letter-spacing="-0.3" transform="rotate(5.0 703.2 502.6)">Laboris&#160;Nisi</text><text x="836.5" y="496.7" font-size="10" fill="#e8e800" letter-spacing="-0.3">1810</text><text x="881.5" y="500.0" font-size="10" fill="#e8e800" letter-spacing="-0.3">2506</text><text x="876.9" y="559.3" font-size="10" fill="#e8e800" letter-spacing="-0.3">550</text><text x="655.6" y="568.3" font-size="10" fill="#e8e800" letter-spacing="-0.3">1706</text><text x="719.5" y="567.6" font-size="10" fill="#e8e800" letter-spacing="-0.3">1707</text><text x="775.9" y="574.8" font-size="10" fill="#e8e800" letter-spacing="-0.3">1708</text><text x="835.8" y="576.7" font-size="10" fill="#e8e800" letter-spacing="-0.3">552</text><text x="424" y="358" font-size="10" fill="#d01818" transform="rotate(-57 424 358)">Lorem ipsum</text><text x="473" y="578" font-size="10" fill="#d01818" transform="rotate(55.4 473 578)">Minim veniam</text><path d="M356.4 275.2h6.4v6.4h-6.4zM367.8 278.7h6.4v6.4h-6.4zM350.8 282.9h6.4v6.4h-6.4zM360.9 284.1h6.4v6.4h-6.4zM366.8 286.4h6.4v6.4h-6.4zM334.2 287.8h6.4v6.4h-6.4zM339.6 287.8h6.4v6.4h-6.4zM344.3 287.8h6.4v6.4h-6.4zM332.5 294.5h6.4v6.4h-6.4zM334.2 299.5h6.4v6.4h-6.4zM343.1 301.6h6.4v6.4h-6.4zM333.6 305.4h6.4v6.4h-6.4zM337.2 305.4h6.4v6.4h-6.4zM406.3 294.7h6.4v6.4h-6.4zM387.0 300.9h6.4v6.4h-6.4zM364.1 308.3h6.4v6.4h-6.4zM385.4 310.1h6.4v6.4h-6.4zM401.8 311.3h6.4v6.4h-6.4zM455.1 282.9h6.4v6.4h-6.4zM414.0 323.7h6.4v6.4h-6.4zM408.5 340.7h6.4v6.4h-6.4zM400.0 345.1h6.4v6.4h-6.4zM406.2 347.4h6.4v6.4h-6.4zM391.7 353.4h6.4v6.4h-6.4zM433.2 306.6h6.4v6.4h-6.4zM441.5 307.7h6.4v6.4h-6.4zM436.7 313.1h6.4v6.4h-6.4zM449.2 308.9h6.4v6.4h-6.4zM452.1 312.5h6.4v6.4h-6.4zM458.6 311.9h6.4v6.4h-6.4zM468.7 312.5h6.4v6.4h-6.4zM446.8 318.4h6.4v6.4h-6.4zM468.7 321.4h6.4v6.4h-6.4zM430.8 326.1h6.4v6.4h-6.4zM439.1 331.4h6.4v6.4h-6.4zM424.9 335.0h6.4v6.4h-6.4zM436.1 337.4h6.4v6.4h-6.4zM440.3 340.3h6.4v6.4h-6.4zM448.0 335.0h6.4v6.4h-6.4zM453.9 332.6h6.4v6.4h-6.4zM430.8 348.0h6.4v6.4h-6.4zM450.4 351.0h6.4v6.4h-6.4zM470.5 353.4h6.4v6.4h-6.4zM499.6 266.9h6.4v6.4h-6.4zM507.3 268.1h6.4v6.4h-6.4zM488.4 276.9h6.4v6.4h-6.4zM481.3 282.3h6.4v6.4h-6.4zM493.1 281.7h6.4v6.4h-6.4zM486.6 285.8h6.4v6.4h-6.4zM478.9 290.0h6.4v6.4h-6.4zM480.1 294.7h6.4v6.4h-6.4zM490.8 295.3h6.4v6.4h-6.4zM477.7 303.0h6.4v6.4h-6.4zM484.2 303.0h6.4v6.4h-6.4zM488.4 309.5h6.4v6.4h-6.4zM482.5 314.3h6.4v6.4h-6.4zM548.2 275.2h6.4v6.4h-6.4zM596.2 271.6h6.4v6.4h-6.4zM592.1 276.3h6.4v6.4h-6.4zM598.6 278.1h6.4v6.4h-6.4zM595.6 287.6h6.4v6.4h-6.4zM604.5 285.8h6.4v6.4h-6.4zM557.1 326.7h6.4v6.4h-6.4zM532.2 331.4h6.4v6.4h-6.4zM499.6 335.0h6.4v6.4h-6.4zM509.7 339.7h6.4v6.4h-6.4zM579.6 341.5h6.4v6.4h-6.4zM554.7 348.0h6.4v6.4h-6.4zM566.6 352.2h6.4v6.4h-6.4zM473.0 352.8h6.4v6.4h-6.4zM379.3 366.3h6.4v6.4h-6.4zM392.9 366.9h6.4v6.4h-6.4zM384.0 373.5h6.4v6.4h-6.4zM395.9 378.2h6.4v6.4h-6.4zM407.1 373.5h6.4v6.4h-6.4zM423.1 361.6h6.4v6.4h-6.4zM416.6 378.2h6.4v6.4h-6.4zM403.6 388.3h6.4v6.4h-6.4zM434.4 374.6h6.4v6.4h-6.4zM440.3 368.1h6.4v6.4h-6.4zM442.1 361.0h6.4v6.4h-6.4zM353.2 378.8h6.4v6.4h-6.4zM387.0 384.1h6.4v6.4h-6.4zM359.7 391.2h6.4v6.4h-6.4zM395.9 394.8h6.4v6.4h-6.4zM389.3 401.3h6.4v6.4h-6.4zM400.0 402.5h6.4v6.4h-6.4zM394.1 408.4h6.4v6.4h-6.4zM411.8 395.4h6.4v6.4h-6.4zM420.1 400.7h6.4v6.4h-6.4zM426.7 389.5h6.4v6.4h-6.4zM427.3 396.0h6.4v6.4h-6.4zM427.8 401.9h6.4v6.4h-6.4zM427.8 407.8h6.4v6.4h-6.4zM423.1 413.2h6.4v6.4h-6.4zM408.9 411.4h6.4v6.4h-6.4zM408.9 416.7h6.4v6.4h-6.4zM367.4 406.0h6.4v6.4h-6.4zM360.3 412.0h6.4v6.4h-6.4zM343.7 423.2h6.4v6.4h-6.4zM375.1 426.2h6.4v6.4h-6.4zM357.9 437.4h6.4v6.4h-6.4zM365.0 441.6h6.4v6.4h-6.4zM357.9 443.4h6.4v6.4h-6.4zM435.5 416.1h6.4v6.4h-6.4zM449.8 416.7h6.4v6.4h-6.4zM458.6 416.7h6.4v6.4h-6.4zM440.3 423.8h6.4v6.4h-6.4zM454.5 424.4h6.4v6.4h-6.4zM466.9 422.0h6.4v6.4h-6.4zM469.3 404.3h6.4v6.4h-6.4zM470.5 382.3h6.4v6.4h-6.4zM397.0 430.3h6.4v6.4h-6.4zM404.7 443.4h6.4v6.4h-6.4zM391.7 353.9h6.4v6.4h-6.4zM411.8 359.8h6.4v6.4h-6.4zM402.4 361.0h6.4v6.4h-6.4zM403.6 357.5h6.4v6.4h-6.4zM450.4 350.9h6.4v6.4h-6.4zM480.1 368.1h6.4v6.4h-6.4zM475.4 381.2h6.4v6.4h-6.4zM474.8 391.2h6.4v6.4h-6.4zM475.4 409.6h6.4v6.4h-6.4zM513.3 364.6h6.4v6.4h-6.4zM511.5 369.9h6.4v6.4h-6.4zM509.7 376.4h6.4v6.4h-6.4zM504.4 382.9h6.4v6.4h-6.4zM532.8 360.4h6.4v6.4h-6.4zM550.0 376.4h6.4v6.4h-6.4zM542.9 388.9h6.4v6.4h-6.4zM541.7 396.0h6.4v6.4h-6.4zM539.9 413.2h6.4v6.4h-6.4zM496.1 397.7h6.4v6.4h-6.4zM497.3 404.3h6.4v6.4h-6.4zM489.6 409.6h6.4v6.4h-6.4zM497.3 410.2h6.4v6.4h-6.4zM497.3 416.7h6.4v6.4h-6.4zM492.5 422.0h6.4v6.4h-6.4zM505.0 424.4h6.4v6.4h-6.4zM519.2 424.4h6.4v6.4h-6.4zM528.1 425.0h6.4v6.4h-6.4zM512.7 430.3h6.4v6.4h-6.4zM523.9 432.1h6.4v6.4h-6.4zM536.4 430.3h6.4v6.4h-6.4zM566.0 405.4h6.4v6.4h-6.4zM566.6 412.6h6.4v6.4h-6.4zM559.5 417.3h6.4v6.4h-6.4zM566.6 418.5h6.4v6.4h-6.4zM567.2 424.4h6.4v6.4h-6.4zM561.8 430.3h6.4v6.4h-6.4zM589.1 433.3h6.4v6.4h-6.4zM598.0 433.3h6.4v6.4h-6.4zM582.6 438.6h6.4v6.4h-6.4zM593.8 440.4h6.4v6.4h-6.4zM606.3 438.6h6.4v6.4h-6.4zM383.4 449.2h6.4v6.4h-6.4zM410.1 459.3h6.4v6.4h-6.4zM417.8 461.1h6.4v6.4h-6.4zM427.8 463.5h6.4v6.4h-6.4zM460.4 465.2h6.4v6.4h-6.4zM392.3 469.4h6.4v6.4h-6.4zM401.8 474.7h6.4v6.4h-6.4zM437.9 477.1h6.4v6.4h-6.4zM335.4 484.8h6.4v6.4h-6.4zM356.8 489.5h6.4v6.4h-6.4zM387.6 491.3h6.4v6.4h-6.4zM394.1 494.3h6.4v6.4h-6.4zM403.6 492.5h6.4v6.4h-6.4zM411.3 494.9h6.4v6.4h-6.4zM420.1 488.9h6.4v6.4h-6.4zM426.7 494.9h6.4v6.4h-6.4zM449.2 490.7h6.4v6.4h-6.4zM470.5 483.6h6.4v6.4h-6.4zM335.4 497.8h6.4v6.4h-6.4zM360.9 502.0h6.4v6.4h-6.4zM366.2 503.2h6.4v6.4h-6.4zM387.0 505.5h6.4v6.4h-6.4zM394.7 508.5h6.4v6.4h-6.4zM430.8 500.8h6.4v6.4h-6.4zM439.1 501.4h6.4v6.4h-6.4zM424.9 507.3h6.4v6.4h-6.4zM429.6 507.9h6.4v6.4h-6.4zM434.4 507.3h6.4v6.4h-6.4zM439.1 505.5h6.4v6.4h-6.4zM405.9 513.8h6.4v6.4h-6.4zM411.8 514.4h6.4v6.4h-6.4zM425.5 528.0h6.4v6.4h-6.4zM431.4 529.2h6.4v6.4h-6.4zM435.0 514.4h6.4v6.4h-6.4zM464.6 507.9h6.4v6.4h-6.4zM452.1 523.3h6.4v6.4h-6.4zM471.1 504.9h6.4v6.4h-6.4zM484.2 473.5h6.4v6.4h-6.4zM474.2 483.6h6.4v6.4h-6.4zM517.4 494.3h6.4v6.4h-6.4zM550.6 486.0h6.4v6.4h-6.4zM570.7 484.8h6.4v6.4h-6.4zM580.8 478.9h6.4v6.4h-6.4zM587.9 477.7h6.4v6.4h-6.4zM575.5 466.4h6.4v6.4h-6.4zM606.3 473.5h6.4v6.4h-6.4zM606.9 480.0h6.4v6.4h-6.4zM542.9 496.6h6.4v6.4h-6.4zM555.9 502.6h6.4v6.4h-6.4zM563.0 501.4h6.4v6.4h-6.4zM553.6 506.1h6.4v6.4h-6.4zM533.4 503.2h6.4v6.4h-6.4zM519.2 515.0h6.4v6.4h-6.4zM567.2 512.0h6.4v6.4h-6.4zM578.4 506.7h6.4v6.4h-6.4zM555.3 520.3h6.4v6.4h-6.4zM561.3 520.3h6.4v6.4h-6.4zM555.3 528.0h6.4v6.4h-6.4zM566.0 526.3h6.4v6.4h-6.4zM576.1 528.0h6.4v6.4h-6.4zM525.1 532.8h6.4v6.4h-6.4zM536.4 529.8h6.4v6.4h-6.4zM425.5 528.6h6.4v6.4h-6.4zM431.4 529.2h6.4v6.4h-6.4zM455.1 538.6h6.4v6.4h-6.4zM443.2 548.1h6.4v6.4h-6.4zM465.2 554.1h6.4v6.4h-6.4zM446.8 561.8h6.4v6.4h-6.4zM470.5 564.7h6.4v6.4h-6.4zM398.2 562.3h6.4v6.4h-6.4zM426.1 567.1h6.4v6.4h-6.4zM459.2 570.0h6.4v6.4h-6.4zM406.5 578.3h6.4v6.4h-6.4zM392.9 584.3h6.4v6.4h-6.4zM455.7 578.3h6.4v6.4h-6.4zM462.2 578.3h6.4v6.4h-6.4zM452.1 581.3h6.4v6.4h-6.4zM449.2 586.6h6.4v6.4h-6.4zM421.9 591.4h6.4v6.4h-6.4zM424.9 588.4h6.4v6.4h-6.4zM470.5 588.4h6.4v6.4h-6.4zM377.5 599.7h6.4v6.4h-6.4zM405.9 599.1h6.4v6.4h-6.4zM376.3 607.4h6.4v6.4h-6.4zM404.1 608.6h6.4v6.4h-6.4zM413.0 610.3h6.4v6.4h-6.4zM421.9 613.3h6.4v6.4h-6.4zM433.8 603.8h6.4v6.4h-6.4zM439.7 603.2h6.4v6.4h-6.4zM445.0 602.6h6.4v6.4h-6.4zM435.5 613.9h6.4v6.4h-6.4zM443.2 615.1h6.4v6.4h-6.4zM523.9 542.2h6.4v6.4h-6.4zM517.4 536.9h6.4v6.4h-6.4zM531.6 538.1h6.4v6.4h-6.4zM522.2 567.7h6.4v6.4h-6.4zM481.3 576.0h6.4v6.4h-6.4zM473.6 587.8h6.4v6.4h-6.4zM478.3 597.3h6.4v6.4h-6.4zM499.1 601.4h6.4v6.4h-6.4zM576.1 588.4h6.4v6.4h-6.4zM582.0 590.2h6.4v6.4h-6.4zM592.1 586.6h6.4v6.4h-6.4zM585.0 595.5h6.4v6.4h-6.4zM591.5 594.3h6.4v6.4h-6.4zM569.5 601.4h6.4v6.4h-6.4zM588.5 601.4h6.4v6.4h-6.4zM580.2 605.6h6.4v6.4h-6.4zM585.0 608.6h6.4v6.4h-6.4zM569.0 613.3h6.4v6.4h-6.4zM574.3 614.5h6.4v6.4h-6.4zM579.6 614.5h6.4v6.4h-6.4zM595.0 614.5h6.4v6.4h-6.4zM606.8 472.7h6.4v6.4h-6.4zM606.8 479.8h6.4v6.4h-6.4zM587.9 477.9h6.4v6.4h-6.4zM581.4 479.2h6.4v6.4h-6.4zM578.8 506.6h6.4v6.4h-6.4zM578.1 528.1h6.4v6.4h-6.4zM577.5 466.1h6.4v6.4h-6.4zM592.4 587.2h6.4v6.4h-6.4zM591.1 594.4h6.4v6.4h-6.4zM584.6 596.3h6.4v6.4h-6.4zM582.0 590.5h6.4v6.4h-6.4zM587.9 601.6h6.4v6.4h-6.4zM580.7 605.5h6.4v6.4h-6.4zM578.8 613.3h6.4v6.4h-6.4zM595.1 614.6h6.4v6.4h-6.4zM585.3 607.4h6.4v6.4h-6.4z" fill="#0a88b8" stroke="#9a9aa8" stroke-width="0.8"/><path d="M369.0 266.9h6.4v6.4h-6.4zM346.1 281.1h6.4v6.4h-6.4zM356.2 283.5h6.4v6.4h-6.4zM366.8 283.5h6.4v6.4h-6.4zM328.9 287.0h6.4v6.4h-6.4zM347.3 290.0h6.4v6.4h-6.4zM366.2 291.2h6.4v6.4h-6.4zM327.1 294.1h6.4v6.4h-6.4zM336.6 294.7h6.4v6.4h-6.4zM342.5 306.6h6.4v6.4h-6.4zM417.8 313.4h6.4v6.4h-6.4zM446.2 298.9h6.4v6.4h-6.4zM464.0 266.9h6.4v6.4h-6.4zM410.1 334.1h6.4v6.4h-6.4zM380.8 351.3h6.4v6.4h-6.4zM415.4 353.0h6.4v6.4h-6.4zM427.0 353.4h6.4v6.4h-6.4zM430.2 304.8h6.4v6.4h-6.4zM436.1 317.8h6.4v6.4h-6.4zM463.4 311.9h6.4v6.4h-6.4zM452.1 318.6h6.4v6.4h-6.4zM445.0 322.0h6.4v6.4h-6.4zM468.1 330.9h6.4v6.4h-6.4zM429.9 335.9h6.4v6.4h-6.4zM445.6 337.4h6.4v6.4h-6.4zM444.4 349.8h6.4v6.4h-6.4zM456.9 352.8h6.4v6.4h-6.4zM493.7 276.9h6.4v6.4h-6.4zM481.3 286.4h6.4v6.4h-6.4zM491.9 287.0h6.4v6.4h-6.4zM489.6 303.6h6.4v6.4h-6.4zM475.4 313.7h6.4v6.4h-6.4zM487.8 315.4h6.4v6.4h-6.4zM596.8 274.6h6.4v6.4h-6.4zM588.5 279.9h6.4v6.4h-6.4zM603.9 279.9h6.4v6.4h-6.4zM599.8 289.4h6.4v6.4h-6.4zM532.8 323.7h6.4v6.4h-6.4zM580.8 329.7h6.4v6.4h-6.4zM531.0 338.6h6.4v6.4h-6.4zM554.7 343.3h6.4v6.4h-6.4zM554.1 352.2h6.4v6.4h-6.4zM578.4 353.4h6.4v6.4h-6.4zM481.9 354.5h6.4v6.4h-6.4zM387.0 365.2h6.4v6.4h-6.4zM399.4 369.3h6.4v6.4h-6.4zM409.5 365.8h6.4v6.4h-6.4zM419.0 369.3h6.4v6.4h-6.4zM404.7 381.2h6.4v6.4h-6.4zM413.6 386.5h6.4v6.4h-6.4zM429.6 374.1h6.4v6.4h-6.4zM439.7 375.2h6.4v6.4h-6.4zM329.5 376.4h6.4v6.4h-6.4zM377.5 381.8h6.4v6.4h-6.4zM381.0 381.8h6.4v6.4h-6.4zM392.9 386.5h6.4v6.4h-6.4zM389.9 394.8h6.4v6.4h-6.4zM401.2 396.0h6.4v6.4h-6.4zM394.7 401.9h6.4v6.4h-6.4zM388.2 407.8h6.4v6.4h-6.4zM399.4 409.0h6.4v6.4h-6.4zM410.1 404.3h6.4v6.4h-6.4zM429.6 390.0h6.4v6.4h-6.4zM417.8 413.2h6.4v6.4h-6.4zM427.8 414.3h6.4v6.4h-6.4zM408.3 421.4h6.4v6.4h-6.4zM376.3 413.2h6.4v6.4h-6.4zM342.5 436.3h6.4v6.4h-6.4zM365.0 437.4h6.4v6.4h-6.4zM373.9 438.6h6.4v6.4h-6.4zM350.2 444.5h6.4v6.4h-6.4zM467.5 417.3h6.4v6.4h-6.4zM443.2 424.4h6.4v6.4h-6.4zM466.9 426.8h6.4v6.4h-6.4zM470.5 391.2h6.4v6.4h-6.4zM407.1 428.0h6.4v6.4h-6.4zM400.6 438.6h6.4v6.4h-6.4zM381.0 351.5h6.4v6.4h-6.4zM415.4 353.3h6.4v6.4h-6.4zM426.7 353.3h6.4v6.4h-6.4zM444.4 350.4h6.4v6.4h-6.4zM481.9 354.5h6.4v6.4h-6.4zM480.1 381.2h6.4v6.4h-6.4zM478.9 391.8h6.4v6.4h-6.4zM473.6 428.0h6.4v6.4h-6.4zM498.5 382.3h6.4v6.4h-6.4zM509.7 384.1h6.4v6.4h-6.4zM551.2 362.8h6.4v6.4h-6.4zM549.4 389.5h6.4v6.4h-6.4zM541.1 400.7h6.4v6.4h-6.4zM499.1 397.7h6.4v6.4h-6.4zM487.2 421.4h6.4v6.4h-6.4zM497.9 422.0h6.4v6.4h-6.4zM537.0 425.0h6.4v6.4h-6.4zM512.7 432.7h6.4v6.4h-6.4zM536.4 435.1h6.4v6.4h-6.4zM569.0 406.0h6.4v6.4h-6.4zM557.1 429.1h6.4v6.4h-6.4zM567.2 430.3h6.4v6.4h-6.4zM606.9 433.3h6.4v6.4h-6.4zM582.0 441.0h6.4v6.4h-6.4zM606.3 443.4h6.4v6.4h-6.4zM373.9 448.6h6.4v6.4h-6.4zM394.1 452.2h6.4v6.4h-6.4zM355.6 458.7h6.4v6.4h-6.4zM403.0 459.3h6.4v6.4h-6.4zM438.5 464.1h6.4v6.4h-6.4zM453.9 452.2h6.4v6.4h-6.4zM390.5 486.0h6.4v6.4h-6.4zM382.2 493.7h6.4v6.4h-6.4zM417.2 495.4h6.4v6.4h-6.4zM436.7 490.1h6.4v6.4h-6.4zM436.1 495.4h6.4v6.4h-6.4zM462.2 486.6h6.4v6.4h-6.4zM329.5 496.6h6.4v6.4h-6.4zM340.8 499.0h6.4v6.4h-6.4zM382.2 507.3h6.4v6.4h-6.4zM392.3 507.9h6.4v6.4h-6.4zM398.2 509.7h6.4v6.4h-6.4zM414.8 519.1h6.4v6.4h-6.4zM424.3 522.1h6.4v6.4h-6.4zM453.3 533.4h6.4v6.4h-6.4zM435.5 535.1h6.4v6.4h-6.4zM483.1 467.0h6.4v6.4h-6.4zM485.4 480.6h6.4v6.4h-6.4zM474.2 504.3h6.4v6.4h-6.4zM561.3 483.6h6.4v6.4h-6.4zM580.2 486.0h6.4v6.4h-6.4zM568.4 502.6h6.4v6.4h-6.4zM544.1 504.9h6.4v6.4h-6.4zM566.6 521.5h6.4v6.4h-6.4zM554.1 533.4h6.4v6.4h-6.4zM518.0 527.4h6.4v6.4h-6.4zM531.6 532.8h6.4v6.4h-6.4zM452.7 533.3h6.4v6.4h-6.4zM435.0 538.1h6.4v6.4h-6.4zM458.1 543.4h6.4v6.4h-6.4zM452.1 560.6h6.4v6.4h-6.4zM443.8 565.3h6.4v6.4h-6.4zM408.3 568.3h6.4v6.4h-6.4zM408.3 589.0h6.4v6.4h-6.4zM466.9 578.9h6.4v6.4h-6.4zM436.1 594.3h6.4v6.4h-6.4zM441.5 592.0h6.4v6.4h-6.4zM446.8 590.8h6.4v6.4h-6.4zM430.8 613.3h6.4v6.4h-6.4zM469.3 611.5h6.4v6.4h-6.4zM494.3 538.1h6.4v6.4h-6.4zM516.2 541.6h6.4v6.4h-6.4zM531.0 543.4h6.4v6.4h-6.4zM473.6 564.7h6.4v6.4h-6.4zM571.9 571.2h6.4v6.4h-6.4zM489.6 587.8h6.4v6.4h-6.4zM489.6 600.3h6.4v6.4h-6.4zM508.5 615.1h6.4v6.4h-6.4zM553.6 602.0h6.4v6.4h-6.4zM580.2 599.1h6.4v6.4h-6.4zM592.7 602.0h6.4v6.4h-6.4zM584.4 614.5h6.4v6.4h-6.4zM580.7 486.4h6.4v6.4h-6.4zM580.1 599.0h6.4v6.4h-6.4zM584.0 601.6h6.4v6.4h-6.4zM584.0 613.9h6.4v6.4h-6.4z" fill="#0000c8" stroke="#9a9aa8" stroke-width="0.8"/><path d="M357.3 266.9h6.4v6.4h-6.4zM343.7 295.9h6.4v6.4h-6.4zM329.5 304.8h6.4v6.4h-6.4zM395.0 343.1h6.4v6.4h-6.4zM432.6 343.3h6.4v6.4h-6.4zM459.2 333.8h6.4v6.4h-6.4zM459.2 338.6h6.4v6.4h-6.4zM459.2 343.3h6.4v6.4h-6.4zM458.1 348.0h6.4v6.4h-6.4zM481.9 266.9h6.4v6.4h-6.4zM493.1 266.9h6.4v6.4h-6.4zM480.7 276.3h6.4v6.4h-6.4zM596.8 266.9h6.4v6.4h-6.4zM594.4 282.3h6.4v6.4h-6.4zM329.5 387.1h6.4v6.4h-6.4zM421.3 389.5h6.4v6.4h-6.4zM344.9 403.7h6.4v6.4h-6.4zM344.9 410.2h6.4v6.4h-6.4zM350.8 436.8h6.4v6.4h-6.4zM443.2 416.7h6.4v6.4h-6.4zM458.1 348.6h6.4v6.4h-6.4zM513.9 358.1h6.4v6.4h-6.4zM490.8 397.7h6.4v6.4h-6.4zM513.3 425.0h6.4v6.4h-6.4zM560.7 405.4h6.4v6.4h-6.4zM582.6 433.3h6.4v6.4h-6.4zM329.5 485.4h6.4v6.4h-6.4zM401.2 486.6h6.4v6.4h-6.4zM421.3 502.0h6.4v6.4h-6.4zM456.9 513.8h6.4v6.4h-6.4zM540.5 488.9h6.4v6.4h-6.4zM549.4 500.2h6.4v6.4h-6.4zM521.0 502.0h6.4v6.4h-6.4zM517.4 532.8h6.4v6.4h-6.4zM408.3 586.0h6.4v6.4h-6.4zM374.5 615.1h6.4v6.4h-6.4zM398.8 615.1h6.4v6.4h-6.4zM403.6 615.1h6.4v6.4h-6.4zM491.3 615.1h6.4v6.4h-6.4zM570.1 591.4h6.4v6.4h-6.4zM605.1 615.1h6.4v6.4h-6.4zM604.8 615.2h6.4v6.4h-6.4z" fill="#d0002a" stroke="#9a9aa8" stroke-width="0.8"/><defs><radialGradient id="ring" cx="613" cy="641" r="40" gradientUnits="userSpaceOnUse"><stop offset="0.74" stop-color="#000" stop-opacity="0"/><stop offset="0.84" stop-color="#34404c"/><stop offset="0.93" stop-color="#5e6c7a"/><stop offset="0.98" stop-color="#56646f"/><stop offset="1" stop-color="#3a4450"/></radialGradient></defs><circle cx="613" cy="641" r="39.5" fill="url(#ring)"/><path d="M612.9 640.6 L612.9 663.5 L618.3 658.3 L622.5 667.5 L626.5 665.8 L622.3 656.8 L629.3 656.8 Z" fill="#fff" stroke="#000" stroke-width="1"/><path d="M612.9 640.6 L612.9 663.5 L618.3 658.3 L622.5 667.5 L626.5 665.8 L622.3 656.8 L629.3 656.8 Z" fill="none" stroke="#fff" stroke-width="0.5" transform="translate(-0.8 -0.8) scale(1)"/></svg>
<div class="abs" style="left:0;top:798px;width:1500px;height:46px;background:#dcdcdc"></div><div class="abs" style="left:1154px;top:798px;width:346px;height:1px;background:#e8e8e8"></div>
<div class="abs" style="left:72px;top:796px;width:1083px;height:2px;background:#d8d8d8"></div>
<div class="abs" style="left:2px;top:808px;font-size:10px;letter-spacing:0.1px;color:#1e1e1e;line-height:12px">247.9506,120.2396</div>
<div class="abs" style="left:2px;top:828px;font-size:10px;letter-spacing:0.1px;color:#1e1e1e;line-height:12px">@247.9506,120.2396</div>
<div class="abs" style="left:253px;top:802px;width:1px;height:40px;background:#9a9a9a"></div>
<div class="abs" style="left:256px;top:808px;font-size:10px;letter-spacing:0.1px;color:#1e1e1e;line-height:12px">275.5668&lt;26°</div>
<div class="abs" style="left:256px;top:828px;font-size:10px;letter-spacing:0.1px;color:#1e1e1e;line-height:12px">@275.5668&lt;26°</div>
<div class="abs" style="left:506px;top:818px;width:6px;height:6px;border-radius:3px;background:#c4c4c4"></div>
<div class="abs" style="left:400px;top:811px;width:300px;text-align:right;font-size:10px;color:#1e1e1e;line-height:11px;letter-spacing:0.12px">Element oder Bereich selektieren<br>Element oder Referenzpunkt verschieben</div>
<svg class="abs" style="left:716px;top:805px" width="24" height="32"><path d="M2.5 9 Q2.5 1.5 11.5 1.5 Q20.5 1.5 20.5 9 L20.5 21 Q20.5 29.5 11.5 29.5 Q2.5 29.5 2.5 21 Z" fill="#fff" stroke="#222" stroke-width="1"/><line x1="2.5" y1="14" x2="20.5" y2="14" stroke="#222" stroke-width="1"/><rect x="10" y="3.5" width="3" height="8" rx="1.5" fill="#fff" stroke="#222" stroke-width="0.9"/></svg>
<div class="abs" style="left:940px;top:818px;width:6px;height:6px;border-radius:3px;background:#c4c4c4"></div>
<div class="abs" style="left:949px;top:811px;font-size:10px;color:#1e1e1e;line-height:11px;letter-spacing:0.12px">Selektierte Objekte:<br>140 Objekte auf 3 Layer.</div>
<div class="abs" style="left:1268px;top:818px;width:6px;height:6px;border-radius:3px;background:#c4c4c4"></div>

<!-- scrollbars -->
<div class="abs" style="left:95px;top:732px;width:988px;height:16px;background:#f7f7f7"></div>
<div class="abs" style="left:1083px;top:732px;width:72px;height:16px;background:#ececec"></div>
<div class="abs" style="left:215px;top:736px;width:748px;height:8px;border-radius:4px;background:#808080"></div>
<div class="abs" style="left:1083px;top:733px;width:70px;text-align:right;font-size:13px;color:#1a1a1a;line-height:16px">10 &lt; 100</div>
<div class="abs" style="left:1139px;top:170px;width:16px;height:562px;background:#f7f7f7;border-right:1px solid #dcdcdc"></div>
<div class="abs" style="left:1143px;top:318px;width:8px;height:268px;border-radius:4px;background:#808080"></div>
<!-- command history -->
<div class="abs" style="left:72px;top:748px;width:1083px;height:49px;background:#ececec"></div>
<div class="abs" style="left:72px;top:748px;width:1082px;height:23px;background:#fff;border-top:2px solid #bcbcbc;border-bottom:1px solid #c4c4c4"></div>
<div class="abs" style="left:1139px;top:749px;width:14px;height:21px;background:#f7f7f7"></div>
<div class="abs" style="left:1143px;top:750px;width:8px;height:17px;border-radius:4px;background:#808080"></div>
<div class="abs" style="left:77px;top:750px;font-size:13px;color:#1414c8;line-height:16px"><i>Kommando:</i> layeradd</div>
<div class="abs" style="left:73px;top:777px;font-size:13px;color:#111;line-height:16px">Kommando:</div>
<div class="abs" style="left:148px;top:776px;width:979px;height:18px;background:#fff"></div>
<div class="abs" style="left:1127px;top:772px;width:26px;height:26px;background:linear-gradient(#f6f6f6,#ececec);border:1px solid #b0b0b0"></div>
<svg class="abs" style="left:1127px;top:772px" width="26" height="25"><rect x="6.5" y="8.5" width="13" height="9" fill="#f0f0f0" stroke="#555" stroke-width="1"/><rect x="6" y="8" width="14" height="2.5" fill="#111"/></svg>

<div class="abs" style="left:1154px;top:121px;width:301px;height:678px;background:#ececec"></div>
<div class="abs" style="left:1154px;top:121px;width:301px;height:2px;background:#c6c6c6"></div>
<svg class="abs" style="left:1154px;top:123px" width="301" height="676" viewBox="1154 123 301 676" font-family="Liberation Sans">
<defs>
<linearGradient id="lbg" x1="0" y1="0" x2="0" y2="1"><stop offset="0" stop-color="#f4f4f4"/><stop offset="0.5" stop-color="#e6e6e6"/><stop offset="1" stop-color="#f2f2f2"/></linearGradient>
<g id="xbtn"><circle cx="0" cy="0" r="7" fill="#6c6c6c"/><path d="M-3 -3 L3 3 M3 -3 L-3 3" stroke="#fff" stroke-width="1.8" stroke-linecap="round"/></g>
<g id="fbtn"><circle cx="0" cy="0" r="7" fill="#6c6c6c"/><rect x="-2" y="-4" width="5.5" height="4.5" fill="none" stroke="#fff" stroke-width="1.1"/><rect x="-4" y="-1.5" width="5.5" height="4.5" fill="#6c6c6c" stroke="#fff" stroke-width="1.1"/></g>
<g id="eye"><path d="M-7 0 Q0 -7 7 0 Q0 7 -7 0 Z" fill="#000"/><circle cx="0" cy="0" r="3.2" fill="#fff"/><circle cx="0.3" cy="0.3" r="2" fill="#000"/><path d="M-7.5 0 Q0 -8.5 7.5 0" fill="none" stroke="#000" stroke-width="1.5"/></g>
<g id="lock"><path d="M-3.2 -1 V-4 A3.2 3.2 0 0 1 3.2 -4 V-1" fill="none" stroke="#b4b4b4" stroke-width="1.6"/><rect x="-5" y="-1.5" width="10" height="7.5" fill="#b4b4b4"/></g>
</defs>
<use href="#xbtn" x="1164" y="133"/><use href="#fbtn" x="1182" y="133"/>
<text x="1322" y="137.5" font-size="12" text-anchor="middle" fill="#2a2a2a">Layerliste</text>
<rect x="1155" y="145.5" width="299" height="25" fill="#b0b0b0"/>
<rect x="1156" y="146.5" width="58" height="23" fill="url(#lbg)"/>
<rect x="1216" y="146.5" width="58" height="23" fill="url(#lbg)"/>
<rect x="1276" y="146.5" width="58" height="23" fill="url(#lbg)"/>
<rect x="1336" y="146.5" width="58" height="23" fill="url(#lbg)"/>
<rect x="1396" y="146.5" width="58" height="23" fill="url(#lbg)"/>
<use href="#eye" x="1185" y="158"/>
<g opacity="0.35"><use href="#eye" x="1245" y="158"/></g>
<path d="M1304.5 151.5 V164.5 M1298 158 H1311" stroke="#e00000" stroke-width="3"/>
<path d="M1358 158 H1371" stroke="#e00000" stroke-width="3"/>
<path d="M1418 165.5 L1429 152.5 L1431 154.5 L1420 167 L1417.5 167.5 Z" fill="#e8a830" stroke="#8a5a10" stroke-width="0.6"/><path d="M1429 152.5 L1430.5 151 L1432.5 153 L1431 154.5 Z" fill="#e02020"/>
<rect x="1155" y="170.5" width="299" height="388" fill="#fff" stroke="#b8b8b8" stroke-width="1"/>
<rect x="1156" y="192" width="297" height="20" fill="#0b4fd6"/>
<rect x="1181.5" y="178.5" width="15" height="8.5" fill="#fff" stroke="#000" stroke-width="1"/>
<rect x="1181" y="198" width="16" height="9" fill="#3a4252"/>
<rect x="1181" y="218" width="16" height="9" fill="#000"/>
<text x="1203" y="187" font-size="13" fill="#111">0</text>
<text x="1203" y="207" font-size="13" fill="#fff">Kadasternummern</text>
<text x="1203" y="227" font-size="13" fill="#111">Text</text>
<use href="#eye" x="1423" y="182"/><use href="#eye" x="1423" y="202"/><use href="#eye" x="1423" y="222"/>
<use href="#lock" x="1445" y="183"/><use href="#lock" x="1445" y="203"/><use href="#lock" x="1445" y="223"/>
<path d="M1395.5 208 L1405.5 197 L1407.5 199 L1397.5 209.5 L1395 210 Z" fill="#e8a830" stroke="#8a5a10" stroke-width="0.6"/><path d="M1405.5 197 L1406.8 195.7 L1408.8 197.7 L1407.5 199 Z" fill="#e02020"/>
<!-- selection filter -->
<use href="#xbtn" x="1164" y="569"/><use href="#fbtn" x="1182" y="569"/>
<text x="1322" y="573.5" font-size="12" text-anchor="middle" fill="#2a2a2a">Selektionsfilter</text>
<line x1="1155" y1="580" x2="1454" y2="580" stroke="#cfcfcf" stroke-width="1.5"/>
<rect x="1167" y="594" width="276" height="136" fill="#e3e3e3" stroke="#dadada" stroke-width="0.6"/>
<text x="1174" y="595.5" font-size="11.5" fill="#222">Filter</text>
<g font-size="13" fill="#111">
<text x="1182" y="630">Objekttyp:</text>
<text x="1182" y="656">Eigenschaft:</text>
<text x="1182" y="682">Vergleich:</text>
<text x="1182" y="708">Wert:</text>
</g>
<g>
<rect x="1265.5" y="614.5" width="162" height="21" rx="5" fill="#fff" stroke="#cfcfcf"/>
<rect x="1265.5" y="640.5" width="162" height="21" rx="5" fill="#fff" stroke="#cfcfcf"/>
<rect x="1265.5" y="666.5" width="162" height="21" rx="5" fill="#fff" stroke="#cfcfcf"/>
<rect x="1265.5" y="692.5" width="162" height="21" rx="5" fill="#fff" stroke="#cfcfcf"/>
<rect x="1409" y="617.5" width="16" height="16" rx="4" fill="#1a78f2"/>
<rect x="1409" y="643.5" width="16" height="16" rx="4" fill="#1a78f2"/>
<rect x="1409" y="669.5" width="16" height="16" rx="4" fill="#1a78f2"/>
<rect x="1409" y="695.5" width="16" height="16" rx="4" fill="#1a78f2"/>
<path d="M1414 623.5 L1417 620.5 L1420 623.5 M1414 627.5 L1417 630.5 L1420 627.5 M1414 649.5 L1417 646.5 L1420 649.5 M1414 653.5 L1417 656.5 L1420 653.5 M1414 675.5 L1417 672.5 L1420 675.5 M1414 679.5 L1417 682.5 L1420 679.5 M1414 701.5 L1417 698.5 L1420 701.5 M1414 705.5 L1417 708.5 L1420 705.5" fill="none" stroke="#fff" stroke-width="1.3"/>
</g>
<g font-size="13" fill="#111">
<text x="1269" y="630">Text [26]</text>
<text x="1269" y="656">Farbe</text>
<text x="1269" y="682">= (ist)</text>
<text x="1291" y="708">Gelb</text>
</g>
<rect x="1269.5" y="699.5" width="15" height="8" fill="#f4f400" stroke="#222" stroke-width="1"/>
<rect x="1167" y="745.5" width="276" height="25" fill="#a8a8a8"/>
<rect x="1168" y="746.5" width="68" height="23" fill="url(#lbg)"/>
<rect x="1237" y="746.5" width="67" height="23" fill="url(#lbg)"/>
<rect x="1305" y="746.5" width="68" height="23" fill="url(#lbg)"/>
<rect x="1374" y="746.5" width="68" height="23" fill="url(#lbg)"/>
<rect x="1195.5" y="752.5" width="12" height="11" fill="#f89090" stroke="#e04040" stroke-width="0.8" stroke-dasharray="1 1"/>
<rect x="1265" y="751" width="9" height="9" fill="#f89090" stroke="#c04040" stroke-width="0.8"/><rect x="1267.5" y="754" width="9" height="9" fill="#f89090" stroke="#c04040" stroke-width="0.8" stroke-dasharray="1 1"/>
<rect x="1333" y="751" width="9" height="9" fill="#f89090" stroke="#c04040" stroke-width="0.8"/><rect x="1336" y="755" width="9" height="9" fill="#fff" stroke="#555" stroke-width="0.8" stroke-dasharray="1 1"/>
<rect x="1402" y="751" width="9" height="9" fill="#fff" stroke="#555" stroke-width="0.8"/><rect x="1405" y="755" width="9" height="9" fill="none" stroke="#555" stroke-width="0.8" stroke-dasharray="1 1"/><rect x="1405" y="755" width="6" height="5" fill="#f89090"/>
</svg>

<div class="abs" style="left:1455px;top:121px;width:45px;height:678px;background:linear-gradient(90deg,#f0f0f0,#dcdcdc 70%,#c8c8c8)"></div>
<div class="abs" style="left:1455px;top:121px;width:45px;height:2px;background:#c6c6c6"></div>
<svg class="abs" style="left:1455px;top:123px" width="45" height="676" viewBox="1455 123 45 676" font-family="Liberation Sans">
<defs>
<g id="win"><rect x="0.5" y="0.5" width="27" height="27" fill="#fff" stroke="#111" stroke-width="1"/><rect x="0" y="0" width="28" height="4.5" fill="#111"/><rect x="1.8" y="1.2" width="3" height="3" fill="#fff"/></g>
</defs>
<g fill="#9a9a9a"><rect x="1461" y="131" width="2" height="2"/><rect x="1467" y="131" width="2" height="2"/><rect x="1473" y="131" width="2" height="2"/><rect x="1479" y="131" width="2" height="2"/><rect x="1485" y="131" width="2" height="2"/></g>
<rect x="1456.5" y="135" width="42" height="43" rx="6" fill="#b4b4b4"/>
<rect x="1456.5" y="330" width="42" height="43" rx="6" fill="#b4b4b4"/>
<rect x="1456.5" y="434" width="42" height="41" rx="6" fill="#b4b4b4"/>
<use href="#win" x="1463" y="142"/>
<path d="M1471 156 L1481 151 L1482 162 L1472 167 Z" fill="#ddd" stroke="#444" stroke-width="0.6"/><path d="M1474 155 L1484 150 L1485 161 L1475 166 Z" fill="#fff" stroke="#444" stroke-width="0.6"/><path d="M1478 162 L1481 154 L1482 161 Z" fill="none" stroke="#e03030" stroke-width="0.7"/>
<use href="#win" x="1463" y="189"/>
<rect x="1468" y="198" width="12" height="9" fill="#fbf0c0" stroke="#444" stroke-width="0.6"/><circle cx="1480" cy="206" r="5" fill="#fbf0c0" fill-opacity="0.85" stroke="#444" stroke-width="0.6"/>
<use href="#win" x="1463" y="235"/>
<rect x="1468.5" y="243.5" width="17" height="11" rx="2" fill="#f2f4f8" stroke="#b0c4e0" stroke-width="0.8"/>
<line x1="1458" y1="276.5" x2="1498" y2="276.5" stroke="#666" stroke-width="1" stroke-dasharray="1 2"/>
<use href="#win" x="1463" y="291"/>
<g fill="#111"><rect x="1466" y="299" width="4" height="3"/><rect x="1466" y="305" width="4" height="3"/><rect x="1466" y="311" width="4" height="3"/></g>
<g fill="none" stroke="#333" stroke-width="0.7"><rect x="1472" y="299" width="15" height="3"/><rect x="1472" y="305" width="15" height="3"/><rect x="1472" y="311" width="15" height="3"/></g>
<use href="#win" x="1463" y="337"/>
<path d="M1469 349 Q1477 346 1485 349 L1479 355 L1479 362 L1476 360 L1476 355 Z" fill="#999" stroke="#444" stroke-width="0.6"/>
<use href="#win" x="1463" y="384"/>
<path d="M1469 395 L1475 398 L1475 406 L1469 409 Z" fill="#fff" stroke="#444" stroke-width="0.7"/><rect x="1475" y="398" width="9" height="8" fill="#888"/><line x1="1466" y1="402" x2="1488" y2="402" stroke="#f08080" stroke-width="0.6"/>
<line x1="1458" y1="425.5" x2="1498" y2="425.5" stroke="#666" stroke-width="1" stroke-dasharray="1 2"/>
<use href="#win" x="1463" y="440"/>
<g stroke="#888" stroke-width="0.5"><path d="M1466 448 h10 M1466 451 h10 M1466 454 h10 M1466 457 h10"/></g><rect x="1463.5" y="462" width="27" height="5.5" fill="none" stroke="#111" stroke-width="0.6"/>
<use href="#win" x="1463" y="487"/>
<rect x="1470" y="494" width="14" height="17" rx="1" fill="#c88a30"/><rect x="1472" y="497" width="10" height="12" fill="#f4f4f4"/><rect x="1474" y="493" width="6" height="3" fill="#888"/>
<line x1="1458" y1="528.5" x2="1498" y2="528.5" stroke="#666" stroke-width="1" stroke-dasharray="1 2"/>
<path d="M1465 549.5 H1472 Q1476.5 549.5 1476.5 553 V554 Q1476.5 557.3 1473 557.3 H1468.5 M1473 557.3 Q1476.5 557.3 1476.5 560.5 V562 Q1476.5 565.5 1472 565.5 H1465 M1480 549.5 H1485 Q1490.5 549.5 1490.5 555 V560 Q1490.5 565.5 1485 565.5 H1480 Z" fill="none" stroke="#111" stroke-width="1.7"/>
</svg>


</body></html>
